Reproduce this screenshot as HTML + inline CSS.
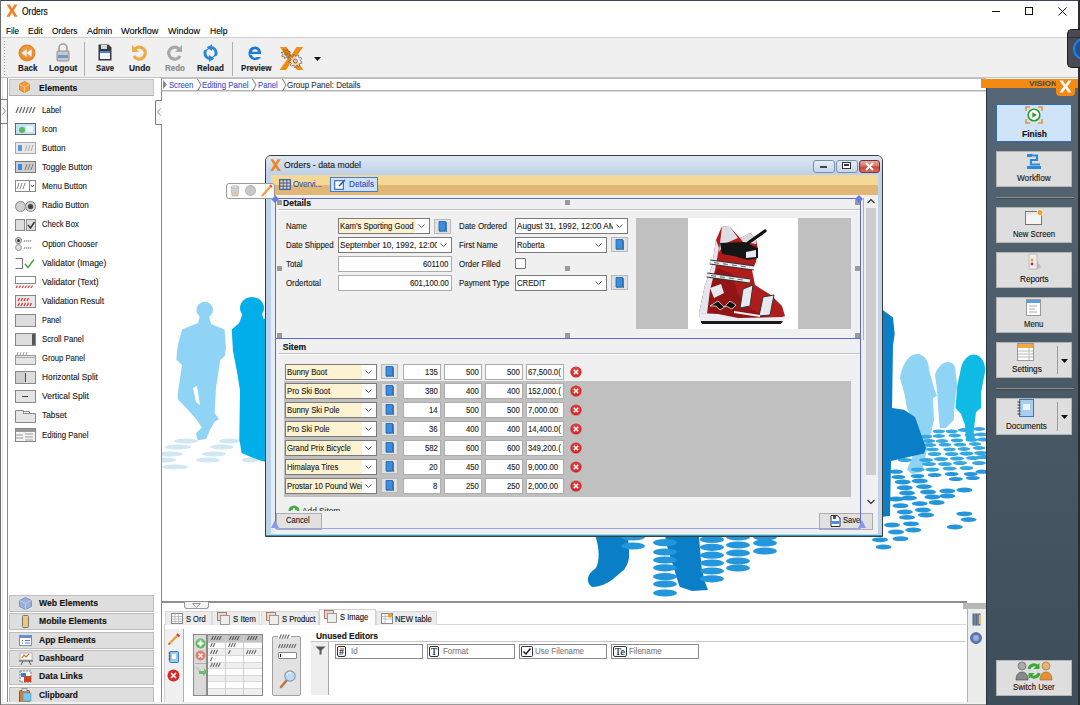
<!DOCTYPE html>
<html><head><meta charset="utf-8">
<style>
*{margin:0;padding:0;box-sizing:border-box}
html,body{width:1080px;height:705px;overflow:hidden;background:#fff;font-family:"Liberation Sans",sans-serif;font-size:11px;color:#000}
.a{position:absolute}
.t{position:absolute;white-space:nowrap;line-height:1}
.b{font-weight:bold}
.t{-webkit-text-stroke:0.12px currentColor}
</style></head><body>
<div class="a" style="left:0;top:0;width:1080px;height:705px;overflow:hidden">

<div class="a" style="left:0px;top:0px;width:1080px;height:1px;background:#3a4856"></div>
<div class="a" style="left:0px;top:0px;width:1px;height:705px;background:#6d6d6d"></div>
<div class="a" style="left:1078px;top:0px;width:2px;height:705px;background:#2d2d2d"></div>
<svg class="a" style="left:6px;top:4px;" width="12" height="13" viewBox="0 0 12 13"><path d="M0.5 0.5h3.2l2.3 3.8 2.3-3.8h3.2l-3.8 6 3.9 6.3h-3.3l-2.3-4-2.4 4H0.4l3.9-6.3z" fill="#f58220"/></svg>
<div class="t" style="left:22.00px;top:6.58px;font-size:10.3px;color:#000;transform:scaleX(0.8197);transform-origin:0 0;">Orders</div>
<div class="a" style="left:992px;top:11px;width:8px;height:1px;background:#111"></div>
<div class="a" style="left:1025px;top:7px;width:8px;height:8px;border:1px solid #111"></div>
<svg class="a" style="left:1058px;top:7px;" width="9" height="9" viewBox="0 0 9 9"><path d="M0.5 0.5L8.5 8.5M8.5 0.5L0.5 8.5" stroke="#111" stroke-width="1"/></svg>
<div class="t" style="left:5.50px;top:25.70px;font-size:9.8px;color:#000;transform:scaleX(0.8233);transform-origin:0 0;">File</div>
<div class="t" style="left:28.00px;top:25.70px;font-size:9.8px;color:#000;transform:scaleX(0.8646);transform-origin:0 0;">Edit</div>
<div class="t" style="left:52.40px;top:25.70px;font-size:9.8px;color:#000;transform:scaleX(0.8481);transform-origin:0 0;">Orders</div>
<div class="t" style="left:86.90px;top:25.70px;font-size:9.8px;color:#000;transform:scaleX(0.9108);transform-origin:0 0;">Admin</div>
<div class="t" style="left:121.40px;top:25.70px;font-size:9.8px;color:#000;transform:scaleX(0.9324);transform-origin:0 0;">Workflow</div>
<div class="t" style="left:167.80px;top:25.70px;font-size:9.8px;color:#000;transform:scaleX(0.9181);transform-origin:0 0;">Window</div>
<div class="t" style="left:210.00px;top:25.70px;font-size:9.8px;color:#000;transform:scaleX(0.8683);transform-origin:0 0;">Help</div>
<div class="a" style="left:1px;top:37px;width:1077px;height:41px;background:#f0f0f0;border-top:1px solid #d0d0d0;border-bottom:1px solid #c4c4c4"></div>
<div class="a" style="left:4px;top:41px;width:1px;height:1px;background:#9a9a9a"></div>
<div class="a" style="left:4px;top:44px;width:1px;height:1px;background:#9a9a9a"></div>
<div class="a" style="left:4px;top:47px;width:1px;height:1px;background:#9a9a9a"></div>
<div class="a" style="left:4px;top:50px;width:1px;height:1px;background:#9a9a9a"></div>
<div class="a" style="left:4px;top:53px;width:1px;height:1px;background:#9a9a9a"></div>
<div class="a" style="left:4px;top:56px;width:1px;height:1px;background:#9a9a9a"></div>
<div class="a" style="left:4px;top:59px;width:1px;height:1px;background:#9a9a9a"></div>
<div class="a" style="left:4px;top:62px;width:1px;height:1px;background:#9a9a9a"></div>
<div class="a" style="left:4px;top:65px;width:1px;height:1px;background:#9a9a9a"></div>
<div class="a" style="left:4px;top:68px;width:1px;height:1px;background:#9a9a9a"></div>
<div class="a" style="left:4px;top:71px;width:1px;height:1px;background:#9a9a9a"></div>
<div class="a" style="left:4px;top:74px;width:1px;height:1px;background:#9a9a9a"></div>
<div class="a" style="left:84px;top:42px;width:1px;height:34px;background:#b0b0b0"></div>
<div class="a" style="left:232px;top:42px;width:1px;height:34px;background:#b0b0b0"></div>
<div class="t" style="left:17.50px;top:64.02px;font-size:8.6px;color:#1a1a1a;font-weight:bold;transform:scaleX(0.9485);transform-origin:0 0;">Back</div>
<div class="t" style="left:48.90px;top:64.02px;font-size:8.6px;color:#1a1a1a;font-weight:bold;transform:scaleX(0.9716);transform-origin:0 0;">Logout</div>
<div class="t" style="left:96.10px;top:64.02px;font-size:8.6px;color:#1a1a1a;font-weight:bold;transform:scaleX(0.8962);transform-origin:0 0;">Save</div>
<div class="t" style="left:129.10px;top:64.02px;font-size:8.6px;color:#1a1a1a;font-weight:bold;transform:scaleX(0.9741);transform-origin:0 0;">Undo</div>
<div class="t" style="left:164.70px;top:64.02px;font-size:8.6px;color:#8a8a8a;font-weight:bold;transform:scaleX(0.9303);transform-origin:0 0;">Redo</div>
<div class="t" style="left:197.20px;top:64.02px;font-size:8.6px;color:#1a1a1a;font-weight:bold;transform:scaleX(0.9348);transform-origin:0 0;">Reload</div>
<div class="t" style="left:240.60px;top:64.02px;font-size:8.6px;color:#1a1a1a;font-weight:bold;transform:scaleX(0.9413);transform-origin:0 0;">Preview</div>
<svg class="a" style="left:18px;top:44px;" width="18" height="18" viewBox="0 0 18 18"><circle cx="9" cy="9" r="8.5" fill="#e8892a"/><circle cx="9" cy="8" r="6" fill="#f0a450" opacity=".6"/><path d="M3.5 9l5-3.8v7.6zM8.5 9l5-3.8v7.6z" fill="#fff"/></svg>
<svg class="a" style="left:55px;top:43px;" width="16" height="19" viewBox="0 0 16 19"><path d="M4 8V5a4 4 0 0 1 8 0v3" fill="none" stroke="#a0a0a0" stroke-width="1.6"/><rect x="2" y="8" width="12" height="10" rx="1" fill="#c8c8c8" stroke="#909090"/><rect x="3" y="12" width="10" height="3" fill="#6c9ad0"/></svg>
<svg class="a" style="left:98px;top:44px;" width="14" height="17" viewBox="0 0 14 17"><path d="M0.5 0.5h10l3 3v13h-13z" fill="#3a3a3a"/><rect x="2" y="7" width="10" height="8" fill="#eef4fb"/><rect x="2" y="7" width="10" height="2" fill="#4a7fd0"/><rect x="3" y="1" width="6" height="4" fill="#d8d8d8"/></svg>
<svg class="a" style="left:131px;top:44px;" width="17" height="17" viewBox="0 0 17 17"><path d="M4 5a6 6 0 1 1 -1 7" fill="none" stroke="#f0a848" stroke-width="3.2"/><path d="M1 1v7h7z" fill="#f0a848"/></svg>
<svg class="a" style="left:166px;top:44px;" width="17" height="17" viewBox="0 0 17 17"><path d="M13 5a6 6 0 1 0 1 7" fill="none" stroke="#a8a8a8" stroke-width="3.2"/><path d="M16 1v7h-7z" fill="#a8a8a8"/></svg>
<svg class="a" style="left:202px;top:44px;" width="17" height="18" viewBox="0 0 17 18"><circle cx="8.5" cy="9" r="5.6" fill="none" stroke="#2a86d8" stroke-width="3"/><path d="M1.5 5.5L5.5 3.5M15.5 12.5L11.5 14.5" stroke="#f0f0f0" stroke-width="2.2"/><path d="M5 3.6L10 0.2V7z" fill="#2a86d8"/><path d="M12 14.4L7 11V17.8z" fill="#2a86d8"/></svg>
<svg class="a" style="left:247px;top:45px;" width="16" height="16" viewBox="0 0 16 16"><path d="M2 9h12c.5-4-2-7.5-6-7.5S1.5 4.5 1.5 8.5 4.5 15 8.5 15c2.8 0 4.5-1.3 5.3-3h-4c-.5.6-1 .8-1.6.8-1.8 0-3-1.3-3.2-2.8zM4.9 6.8c.3-1.5 1.5-2.5 3.1-2.5s2.8 1 3 2.5z" fill="#1e7ad8"/></svg>
<svg class="a" style="left:279px;top:46px;" width="25" height="25" viewBox="0 0 25 25"><path d="M1 1h6.5l5 8 5-8H24l-8 11.5L24.5 24h-6.5L12.5 15.5 7 24H0.5l8.3-11.5z" fill="#f58a10"/><path d="M21.30 15.00 L23.00 16.15 L22.70 17.26 L20.66 17.40 L20.18 18.09 L20.74 20.06 L19.80 20.72 L18.14 19.51 L17.33 19.73 L16.50 21.60 L15.35 21.50 L14.86 19.51 L14.10 19.16 L12.26 20.06 L11.44 19.24 L12.34 17.40 L11.99 16.64 L10.00 16.15 L9.90 15.00 L11.77 14.17 L11.99 13.36 L10.78 11.70 L11.44 10.76 L13.41 11.32 L14.10 10.84 L14.24 8.80 L15.35 8.50 L16.50 10.20 L17.33 10.27 L18.76 8.80 L19.80 9.28 L19.59 11.32 L20.18 11.91 L22.22 11.70 L22.70 12.74 L21.23 14.17z" fill="rgba(255,255,255,.55)" stroke="#6a6a6a" stroke-width=".9"/><circle cx="16.5" cy="15" r="2" fill="none" stroke="#6a6a6a" stroke-width=".9"/><path d="M10.20 8.00 L11.51 8.90 L11.25 9.76 L9.66 9.78 L9.26 10.26 L9.56 11.82 L8.76 12.25 L7.62 11.14 L7.00 11.20 L6.10 12.51 L5.24 12.25 L5.22 10.66 L4.74 10.26 L3.18 10.56 L2.75 9.76 L3.86 8.62 L3.80 8.00 L2.49 7.10 L2.75 6.24 L4.34 6.22 L4.74 5.74 L4.44 4.18 L5.24 3.75 L6.38 4.86 L7.00 4.80 L7.90 3.49 L8.76 3.75 L8.78 5.34 L9.26 5.74 L10.82 5.44 L11.25 6.24 L10.14 7.38z" fill="none" stroke="#7a5a3a" stroke-width=".9"/><circle cx="7" cy="8" r="1.4" fill="none" stroke="#7a5a3a" stroke-width=".8"/></svg>
<svg class="a" style="left:314px;top:57px;" width="7" height="4" viewBox="0 0 7 4"><path d="M0 0h7l-3.5 4z" fill="#111"/></svg>
<div class="a" style="left:1067px;top:29px;width:13px;height:39px;background:#4a4a52;border-radius:5px 0 0 5px;border:1px solid #1e1e22;border-right:none"></div>
<div class="a" style="left:1068px;top:37px;width:12px;height:1px;background:#2a2a30"></div>
<svg class="a" style="left:1072px;top:37px;" width="8" height="24" viewBox="0 0 8 24"><circle cx="12" cy="12" r="10" fill="#2a4e88" stroke="#1a82e8" stroke-width="2.2"/></svg>
<div class="a" style="left:162px;top:78px;width:824px;height:524px;background:#fff"></div>
<div class="a" style="left:162px;top:78px;width:824px;height:1px;background:#bdbdbd"></div>
<div class="a" style="left:162px;top:90px;width:824px;height:1px;background:#b4b4b4"></div>
<div class="a" style="left:162px;top:91px;width:824px;height:1px;background:#dcdcdc"></div>
<svg class="a" style="left:163px;top:80px;" width="4" height="9" viewBox="0 0 4 9"><path d="M0 0L4 4.5L0 9z" fill="#8a8a8a"/></svg>
<div class="t" style="left:169.30px;top:80.91px;font-size:9.2px;color:#3a50d0;transform:scaleX(0.8302);transform-origin:0 0;">Screen</div>
<div class="t" style="left:202.40px;top:80.91px;font-size:9.2px;color:#3a50d0;transform:scaleX(0.8596);transform-origin:0 0;">Editing Panel</div>
<div class="t" style="left:258.00px;top:80.91px;font-size:9.2px;color:#3a50d0;transform:scaleX(0.8373);transform-origin:0 0;">Panel</div>
<div class="t" style="left:286.80px;top:80.91px;font-size:9.2px;color:#333;transform:scaleX(0.8671);transform-origin:0 0;">Group Panel: Details</div>
<svg class="a" style="left:197px;top:79px;" width="5" height="12" viewBox="0 0 5 12"><path d="M0.5 0L4 6L0.5 12" fill="none" stroke="#777" stroke-width="1"/></svg>
<svg class="a" style="left:252px;top:79px;" width="5" height="12" viewBox="0 0 5 12"><path d="M0.5 0L4 6L0.5 12" fill="none" stroke="#777" stroke-width="1"/></svg>
<svg class="a" style="left:282px;top:79px;" width="5" height="12" viewBox="0 0 5 12"><path d="M0.5 0L4 6L0.5 12" fill="none" stroke="#777" stroke-width="1"/></svg>
<svg class="a" style="left:162px;top:91px;" width="824" height="510" viewBox="0 0 824 510"><ellipse cx="24" cy="350" rx="12" ry="2.6" fill="#d2e7f4"/><ellipse cx="68" cy="350" rx="11" ry="2.6" fill="#d2e7f4"/><ellipse cx="16" cy="356" rx="13" ry="2.6" fill="#d2e7f4"/><ellipse cx="60" cy="356" rx="12" ry="2.6" fill="#d2e7f4"/><ellipse cx="8" cy="363" rx="13" ry="2.6" fill="#d2e7f4"/><ellipse cx="52" cy="363" rx="12" ry="2.6" fill="#d2e7f4"/><ellipse cx="90" cy="363" rx="6" ry="2.6" fill="#d2e7f4"/><ellipse cx="3" cy="369" rx="11" ry="2.6" fill="#d2e7f4"/><ellipse cx="46" cy="369" rx="12" ry="2.6" fill="#d2e7f4"/><ellipse cx="88" cy="369" rx="8" ry="2.6" fill="#d2e7f4"/><ellipse cx="13" cy="376" rx="13" ry="2.6" fill="#d2e7f4"/><circle cx="42.69999999999999" cy="219" r="8.3" fill="#8fd4f4"/><path d="M38.0 225.0 L47.0 225.0 L49.0 233.0 L62.6 238.6 L64.0 257.0 L62.6 265.6 L58.3 269.0 L54.0 296.8 L52.6 322.0 L57.0 328.0 L52.6 330.8 L48.0 339.0 L44.0 348.0 L35.6 349.3 L34.0 342.0 L39.9 336.5 L34.0 328.0 L26.0 319.0 L15.8 308.0 L15.8 302.5 L20.0 274.0 L14.3 268.4 L15.8 254.0 L20.0 238.6 L36.0 232.0z" fill="#8fd4f4"/><path d="M31.0 297.0 L35.0 295.0 L38.0 314.0 L34.0 311.0z" fill="#fff"/><ellipse cx="90" cy="217" rx="12" ry="11" fill="#00aeea"/><path d="M81.0 222.0 L100.0 223.0 L104.0 235.0 L76.0 235.0z" fill="#00aeea"/><path d="M78.0 231.5 L69.7 238.6 L71.0 260.0 L75.3 282.6 L78.0 299.6 L77.3 348.0 L79.6 362.0 L96.6 369.0 L104.0 371.0 L104.0 227.0 L100.0 229.0z" fill="#00aeea"/></svg>
<svg class="a" style="left:162px;top:91px;" width="824" height="510" viewBox="0 0 824 510"><path d="M917 354C925 354 929 362 929 370L934 388L937 396L933 398L934 420L928 445L922 472L912 474L907 470L913 455L916 440L912 420L907 408L904 392L900 378C902 366 908 354 917 354z" transform="translate(-162 -91)" fill="#8fd4f4"/><path d="M948 362C953 362 956 366 955.5 372L957.3 386L955 400L953.7 420L946 428L940 428L939 420L937 390L935 375C937 368 942 362 948 362z" transform="translate(-162 -91)" fill="#8fd4f4"/><path d="M974 354.5C982 355 986 364 985 372L981 393L981 408L976 412L973.6 432L975 440L966 441L965 425L961 414L955.5 408L957.3 386L961 368C963 360 968 354.5 974 354.5z" transform="translate(-162 -91)" fill="#0fbbe5"/><ellipse cx="776.8" cy="340.3" rx="6.2" ry="1.9" fill="#35a8e2"/><ellipse cx="789.6" cy="340.3" rx="6.2" ry="1.9" fill="#35a8e2"/><ellipse cx="802.0" cy="339.0" rx="6.2" ry="1.9" fill="#35a8e2"/><ellipse cx="817.0" cy="338.0" rx="6.2" ry="1.9" fill="#35a8e2"/><ellipse cx="764.0" cy="345.6" rx="6.2" ry="1.9" fill="#35a8e2"/><ellipse cx="776.8" cy="345.0" rx="6.2" ry="1.9" fill="#35a8e2"/><ellipse cx="792.8" cy="344.5" rx="6.2" ry="1.9" fill="#35a8e2"/><ellipse cx="808.7" cy="344.0" rx="6.2" ry="1.9" fill="#35a8e2"/><ellipse cx="819.0" cy="343.5" rx="6.2" ry="1.9" fill="#35a8e2"/><ellipse cx="767.0" cy="350.0" rx="6.2" ry="1.9" fill="#35a8e2"/><ellipse cx="780.0" cy="350.0" rx="6.2" ry="1.9" fill="#35a8e2"/><ellipse cx="795.0" cy="349.4" rx="6.2" ry="1.9" fill="#35a8e2"/><ellipse cx="809.8" cy="348.8" rx="6.2" ry="1.9" fill="#35a8e2"/><ellipse cx="821.0" cy="348.5" rx="6.2" ry="1.9" fill="#35a8e2"/><ellipse cx="768.0" cy="354.0" rx="6.2" ry="1.9" fill="#35a8e2"/><ellipse cx="783.0" cy="353.7" rx="6.2" ry="1.9" fill="#35a8e2"/><ellipse cx="798.0" cy="353.7" rx="6.2" ry="1.9" fill="#35a8e2"/><ellipse cx="813.0" cy="353.0" rx="6.2" ry="1.9" fill="#35a8e2"/><ellipse cx="770.4" cy="358.4" rx="6.2" ry="1.9" fill="#35a8e2"/><ellipse cx="787.5" cy="358.4" rx="6.2" ry="1.9" fill="#35a8e2"/><ellipse cx="802.0" cy="358.0" rx="6.2" ry="1.9" fill="#35a8e2"/><ellipse cx="817.0" cy="357.0" rx="6.2" ry="1.9" fill="#35a8e2"/><ellipse cx="772.6" cy="363.0" rx="7" ry="2.1" fill="#35a8e2"/><ellipse cx="789.6" cy="363.0" rx="7" ry="2.1" fill="#35a8e2"/><ellipse cx="804.5" cy="362.6" rx="7" ry="2.1" fill="#35a8e2"/><ellipse cx="819.0" cy="362.0" rx="7" ry="2.1" fill="#35a8e2"/><ellipse cx="742.8" cy="369.0" rx="7" ry="2.1" fill="#35a8e2"/><ellipse cx="764.0" cy="369.0" rx="7" ry="2.1" fill="#35a8e2"/><ellipse cx="779.0" cy="368.0" rx="7" ry="2.1" fill="#35a8e2"/><ellipse cx="795.0" cy="367.5" rx="7" ry="2.1" fill="#35a8e2"/><ellipse cx="811.0" cy="367.0" rx="7" ry="2.1" fill="#35a8e2"/><ellipse cx="821.0" cy="366.0" rx="7" ry="2.1" fill="#35a8e2"/><ellipse cx="767.0" cy="373.0" rx="7" ry="2.1" fill="#35a8e2"/><ellipse cx="783.0" cy="373.0" rx="7" ry="2.1" fill="#35a8e2"/><ellipse cx="798.0" cy="372.0" rx="7" ry="2.1" fill="#35a8e2"/><ellipse cx="817.0" cy="372.0" rx="7" ry="2.1" fill="#35a8e2"/><ellipse cx="734.0" cy="380.7" rx="7" ry="2.1" fill="#2496dc"/><ellipse cx="755.6" cy="378.6" rx="7" ry="2.1" fill="#35a8e2"/><ellipse cx="770.4" cy="378.6" rx="7" ry="2.1" fill="#35a8e2"/><ellipse cx="787.5" cy="377.5" rx="7" ry="2.1" fill="#35a8e2"/><ellipse cx="804.5" cy="377.0" rx="7" ry="2.1" fill="#35a8e2"/><ellipse cx="820.4" cy="380.7" rx="7" ry="2.1" fill="#2496dc"/><ellipse cx="736.4" cy="386.0" rx="7" ry="2.1" fill="#2496dc"/><ellipse cx="755.6" cy="385.0" rx="7" ry="2.1" fill="#2496dc"/><ellipse cx="772.6" cy="384.0" rx="7" ry="2.1" fill="#2496dc"/><ellipse cx="789.6" cy="383.0" rx="7" ry="2.1" fill="#2496dc"/><ellipse cx="808.7" cy="383.0" rx="7" ry="2.1" fill="#2496dc"/><ellipse cx="793.8" cy="388.0" rx="7" ry="2.1" fill="#2496dc"/><ellipse cx="810.9" cy="387.0" rx="7" ry="2.1" fill="#2496dc"/><ellipse cx="740.7" cy="391.0" rx="8" ry="2.4" fill="#2496dc"/><ellipse cx="757.7" cy="390.0" rx="8" ry="2.4" fill="#2496dc"/><ellipse cx="742.8" cy="396.7" rx="8" ry="2.4" fill="#2496dc"/><ellipse cx="762.0" cy="395.6" rx="8" ry="2.4" fill="#2496dc"/><ellipse cx="785.3" cy="400.0" rx="8" ry="2.4" fill="#2496dc"/><ellipse cx="802.4" cy="399.0" rx="8" ry="2.4" fill="#2496dc"/><ellipse cx="745.0" cy="402.0" rx="8" ry="2.4" fill="#2496dc"/><ellipse cx="766.0" cy="401.0" rx="8" ry="2.4" fill="#2496dc"/><ellipse cx="785.3" cy="405.0" rx="8" ry="2.4" fill="#2496dc"/><ellipse cx="734.0" cy="408.0" rx="8" ry="2.4" fill="#2496dc"/><ellipse cx="747.0" cy="407.0" rx="8" ry="2.4" fill="#2496dc"/><ellipse cx="770.4" cy="406.0" rx="8" ry="2.4" fill="#2496dc"/><ellipse cx="757.7" cy="412.6" rx="8" ry="2.4" fill="#2496dc"/><ellipse cx="774.7" cy="411.5" rx="8" ry="2.4" fill="#2496dc"/><ellipse cx="738.5" cy="414.7" rx="8" ry="2.4" fill="#2496dc"/><ellipse cx="760.9" cy="419.0" rx="8" ry="2.4" fill="#2496dc"/><ellipse cx="742.8" cy="421.0" rx="8" ry="2.4" fill="#2496dc"/><ellipse cx="802.4" cy="422.8" rx="8" ry="2.4" fill="#2496dc"/><ellipse cx="764.0" cy="424.0" rx="8" ry="2.4" fill="#2496dc"/><ellipse cx="745.0" cy="426.4" rx="8" ry="2.4" fill="#2496dc"/><ellipse cx="806.6" cy="428.6" rx="8" ry="2.4" fill="#2496dc"/><ellipse cx="730.0" cy="434.0" rx="8" ry="2.4" fill="#2496dc"/><ellipse cx="749.0" cy="432.8" rx="8" ry="2.4" fill="#2496dc"/><ellipse cx="792.8" cy="436.0" rx="8" ry="2.4" fill="#2496dc"/><ellipse cx="751.3" cy="439.0" rx="8" ry="2.4" fill="#2496dc"/><ellipse cx="734.0" cy="441.0" rx="8" ry="2.4" fill="#2496dc"/><ellipse cx="738.5" cy="447.7" rx="8" ry="2.4" fill="#2496dc"/><ellipse cx="718.0" cy="448.8" rx="8" ry="2.4" fill="#2496dc"/><ellipse cx="721.5" cy="456.0" rx="8" ry="2.4" fill="#2496dc"/><path d="M708.0 214.0 L720.8 219.0 L731.0 226.6 L732.7 243.0 L731.0 254.0 L730.0 317.0 L742.0 318.7 L753.0 326.0 L764.0 357.0 L762.0 362.6 L729.0 370.0 L728.0 425.0 L708.0 427.0z" fill="#0a7fc8"/><path d="M432.6 439.0L467.0 439.0C464.0 457.0 472.0 465.0 462.0 479.0C454.0 484.0 448.0 495.0 430.0 496.0C424.0 492.0 424.0 483.0 434.0 477.0C438.0 469.0 437.0 457.0 434.0 447.0z" fill="#0a7fc8"/><path d="M502.0 439.0 L536.5 439.0 L538.0 458.0 L539.7 477.0 L543.0 491.0 L546.0 499.0 L530.0 500.0 L517.6 495.7 L514.5 486.0 L509.8 470.5 L505.0 454.7z" fill="#0a7fc8"/><ellipse cx="503" cy="451.6" rx="12" ry="3.6" fill="#2496dc"/><ellipse cx="503" cy="461" rx="12" ry="3.6" fill="#2496dc"/><ellipse cx="503" cy="469" rx="12" ry="3.6" fill="#2496dc"/><ellipse cx="503" cy="476.79999999999995" rx="12" ry="3.6" fill="#2496dc"/><ellipse cx="503" cy="485.6" rx="12" ry="3.6" fill="#2496dc"/><ellipse cx="503" cy="493" rx="12" ry="3.6" fill="#2496dc"/><ellipse cx="503" cy="502" rx="12" ry="3.6" fill="#2496dc"/><ellipse cx="550" cy="448.4" rx="12" ry="3.6" fill="#2496dc"/><ellipse cx="550" cy="456.29999999999995" rx="12" ry="3.6" fill="#2496dc"/><ellipse cx="550" cy="464.20000000000005" rx="12" ry="3.6" fill="#2496dc"/><ellipse cx="550" cy="472" rx="12" ry="3.6" fill="#2496dc"/><ellipse cx="550" cy="480" rx="12" ry="3.6" fill="#2496dc"/><ellipse cx="550" cy="487.79999999999995" rx="12" ry="3.6" fill="#2496dc"/><ellipse cx="576" cy="446" rx="12" ry="3.6" fill="#2496dc"/><ellipse cx="576" cy="454" rx="12" ry="3.6" fill="#2496dc"/><ellipse cx="576" cy="462" rx="12" ry="3.6" fill="#2496dc"/><ellipse cx="576" cy="470" rx="12" ry="3.6" fill="#2496dc"/><ellipse cx="576" cy="477" rx="12" ry="3.6" fill="#2496dc"/><ellipse cx="603" cy="446" rx="12" ry="3.6" fill="#2496dc"/><ellipse cx="603" cy="452" rx="12" ry="3.6" fill="#2496dc"/><ellipse cx="603" cy="460" rx="12" ry="3.6" fill="#2496dc"/><ellipse cx="471" cy="446" rx="12" ry="3.6" fill="#2496dc"/><ellipse cx="471" cy="455" rx="12" ry="3.6" fill="#2496dc"/></svg>
<div class="a" style="left:1px;top:78px;width:161px;height:627px;background:#fff"></div>
<div class="a" style="left:1px;top:78px;width:6px;height:627px;background:#fff"></div>
<div class="a" style="left:2px;top:78px;width:1px;height:627px;background:#e4e4e4"></div>
<div class="a" style="left:7px;top:78px;width:1px;height:627px;background:#8c8c8c"></div>
<div class="a" style="left:161px;top:78px;width:1px;height:627px;background:#8a8a8a"></div>
<div class="a" style="left:1px;top:99px;width:7px;height:25px;background:#f6f6f6;border:1px solid #7a7a7a;border-left:none;border-radius:0 2px 2px 0"></div>
<svg class="a" style="left:2px;top:107px;" width="4" height="8" viewBox="0 0 4 8"><path d="M0.5 0.5L3.5 4L0.5 7.5" fill="none" stroke="#999" stroke-width="1"/></svg>
<div class="a" style="left:155px;top:100px;width:7px;height:25px;background:#f6f6f6;border:1px solid #7a7a7a;border-right:none;border-radius:2px 0 0 2px"></div>
<svg class="a" style="left:157px;top:108px;" width="4" height="8" viewBox="0 0 4 8"><path d="M3.5 0.5L0.5 4L3.5 7.5" fill="none" stroke="#999" stroke-width="1"/></svg>
<div class="a" style="left:9px;top:79px;width:145px;height:17px;background:#dedede;border:1px solid #c4c4c4;border-bottom:1px solid #b0b0b0"></div>
<svg class="a" style="left:19px;top:81px;" width="11" height="12" viewBox="0 0 11 12"><path d="M5.5 0.5l5 2.8v5.6l-5 2.8-5-2.8V3.3z" fill="#f29b3a" stroke="#e07a10" stroke-width=".8"/><path d="M0.5 3.3l5 2.8 5-2.8M5.5 6.1v5.4" fill="none" stroke="#fcd09a" stroke-width=".8"/></svg>
<div class="t" style="left:38.80px;top:83.72px;font-size:8.6px;color:#111;font-weight:bold;transform:scaleX(1.0043);transform-origin:0 0;">Elements</div>
<div class="t" style="left:42.00px;top:105.88px;font-size:9px;color:#1a1a1a;transform:scaleX(0.8629);transform-origin:0 0;">Label</div>
<svg class="a" style="left:15px;top:104px;" width="21" height="12" viewBox="0 0 21 12"><path d="M1.0 9L3.5 3" stroke="#666" stroke-width="1.2"/><path d="M4.3 9L6.8 3" stroke="#666" stroke-width="1.2"/><path d="M7.6 9L10.1 3" stroke="#666" stroke-width="1.2"/><path d="M10.9 9L13.4 3" stroke="#666" stroke-width="1.2"/><path d="M14.2 9L16.7 3" stroke="#666" stroke-width="1.2"/><path d="M17.5 9L20.0 3" stroke="#666" stroke-width="1.2"/></svg>
<div class="t" style="left:42.00px;top:124.98px;font-size:9px;color:#1a1a1a;transform:scaleX(0.8818);transform-origin:0 0;">Icon</div>
<svg class="a" style="left:15px;top:123px;" width="21" height="12" viewBox="0 0 21 12"><rect x=".5" y=".5" width="20" height="11" fill="#bfe3f7" stroke="#666"/><circle cx="7" cy="7" r="3" fill="#5cb85c"/><path d="M11 3h7v6h-7z" fill="#fff" opacity=".7"/></svg>
<div class="t" style="left:42.00px;top:144.08px;font-size:9px;color:#1a1a1a;transform:scaleX(0.9070);transform-origin:0 0;">Button</div>
<svg class="a" style="left:15px;top:142px;" width="21" height="12" viewBox="0 0 21 12"><rect x=".5" y=".5" width="20" height="11" fill="#e8e8e8" stroke="#aaa"/><rect x="3" y="3" width="4" height="6" fill="#5a9ad8"/><path d="M10 9l2-6M13 9l2-6M16 9l2-6" stroke="#aaa"/></svg>
<div class="t" style="left:42.00px;top:163.18px;font-size:9px;color:#1a1a1a;transform:scaleX(0.9085);transform-origin:0 0;">Toggle Button</div>
<svg class="a" style="left:15px;top:161px;" width="21" height="12" viewBox="0 0 21 12"><rect x=".5" y=".5" width="20" height="11" fill="#cfcfcf" stroke="#777"/><rect x="3" y="3" width="4" height="6" fill="#3a8ad8"/><path d="M10 9l2-6M13 9l2-6M16 9l2-6" stroke="#777"/></svg>
<div class="t" style="left:42.00px;top:182.28px;font-size:9px;color:#1a1a1a;transform:scaleX(0.8818);transform-origin:0 0;">Menu Button</div>
<svg class="a" style="left:15px;top:180px;" width="21" height="12" viewBox="0 0 21 12"><rect x=".5" y=".5" width="20" height="11" fill="#fff" stroke="#888"/><path d="M14.5 .5v11" stroke="#888"/><path d="M2 9l2-6M5 9l2-6M8 9l2-6" stroke="#888"/><path d="M16 5l1.5 2 1.5-2" fill="none" stroke="#555"/></svg>
<div class="t" style="left:42.00px;top:201.38px;font-size:9px;color:#1a1a1a;transform:scaleX(0.8975);transform-origin:0 0;">Radio Button</div>
<svg class="a" style="left:15px;top:200px;" width="21" height="13" viewBox="0 0 21 13"><circle cx="5.5" cy="6.5" r="5" fill="#d0d0d0" stroke="#888"/><circle cx="15.5" cy="6.5" r="5" fill="#d0d0d0" stroke="#888"/><circle cx="15.5" cy="6.5" r="2.6" fill="#444"/></svg>
<div class="t" style="left:42.00px;top:220.48px;font-size:9px;color:#1a1a1a;transform:scaleX(0.8433);transform-origin:0 0;">Check Box</div>
<svg class="a" style="left:15px;top:219px;" width="21" height="12" viewBox="0 0 21 12"><rect x=".5" y=".5" width="9" height="11" fill="#ddd" stroke="#888"/><rect x="11.5" y=".5" width="9" height="11" fill="#ddd" stroke="#888"/><path d="M13 6l2.5 3 4-6" fill="none" stroke="#333" stroke-width="1.4"/></svg>
<div class="t" style="left:42.00px;top:239.58px;font-size:9px;color:#1a1a1a;transform:scaleX(0.8821);transform-origin:0 0;">Option Chooser</div>
<svg class="a" style="left:15px;top:237px;" width="21" height="14" viewBox="0 0 21 14"><circle cx="3.5" cy="3.5" r="3" fill="#ddd" stroke="#777"/><circle cx="3.5" cy="3.5" r="1.5" fill="#333"/><circle cx="3.5" cy="10.5" r="3" fill="#ddd" stroke="#999"/><path d="M9 5l1-2M11 5l1-2M13 5l1-2M15 5l1-2M9 12l1-2M11 12l1-2M13 12l1-2M15 12l1-2" stroke="#777" stroke-width=".8"/></svg>
<div class="t" style="left:42.00px;top:258.68px;font-size:9px;color:#1a1a1a;transform:scaleX(0.9421);transform-origin:0 0;">Validator (Image)</div>
<svg class="a" style="left:15px;top:257px;" width="21" height="13" viewBox="0 0 21 13"><path d="M.5 1.5h7v10h-7" fill="none" stroke="#777"/><path d="M10 7l3 3.5 6-8" fill="none" stroke="#4aa84a" stroke-width="1.5"/></svg>
<div class="t" style="left:42.00px;top:277.78px;font-size:9px;color:#1a1a1a;transform:scaleX(0.9474);transform-origin:0 0;">Validator (Text)</div>
<svg class="a" style="left:15px;top:276px;" width="21" height="13" viewBox="0 0 21 13"><rect x=".5" y=".5" width="20" height="7" fill="#fff" stroke="#888"/><path d="M1 12l1.5-2.5M4 12l1.5-2.5M7 12l1.5-2.5M10 12l1.5-2.5M13 12l1.5-2.5M16 12l1.5-2.5" stroke="#d33" stroke-width="1.2"/></svg>
<div class="t" style="left:42.00px;top:296.88px;font-size:9px;color:#1a1a1a;transform:scaleX(0.9272);transform-origin:0 0;">Validation Result</div>
<svg class="a" style="left:15px;top:295px;" width="21" height="13" viewBox="0 0 21 13"><rect x=".5" y=".5" width="20" height="12" fill="#e8e8e8" stroke="#888"/><path d="M3 6l1.5-3M6 6l1.5-3M9 6l1.5-3M12 6l1.5-3M3 11l1.5-3M6 11l1.5-3M9 11l1.5-3M12 11l1.5-3M15 11l1.5-3" stroke="#d33" stroke-width="1.2"/></svg>
<div class="t" style="left:42.00px;top:315.98px;font-size:9px;color:#1a1a1a;transform:scaleX(0.8255);transform-origin:0 0;">Panel</div>
<svg class="a" style="left:15px;top:314px;" width="21" height="13" viewBox="0 0 21 13"><rect x=".5" y=".5" width="20" height="12" fill="#ddd" stroke="#888"/></svg>
<div class="t" style="left:42.00px;top:335.08px;font-size:9px;color:#1a1a1a;transform:scaleX(0.8684);transform-origin:0 0;">Scroll Panel</div>
<svg class="a" style="left:15px;top:333px;" width="21" height="13" viewBox="0 0 21 13"><rect x=".5" y=".5" width="20" height="12" fill="#ddd" stroke="#888"/><rect x="17" y="1" width="3" height="11" fill="#555"/></svg>
<div class="t" style="left:42.00px;top:354.18px;font-size:9px;color:#1a1a1a;transform:scaleX(0.8510);transform-origin:0 0;">Group Panel</div>
<svg class="a" style="left:15px;top:351px;" width="21" height="14" viewBox="0 0 21 14"><path d="M2 4l1-3M5 4l1-3M8 4l1-3M11 4l1-3" stroke="#888" stroke-width=".8"/><rect x=".5" y="4.5" width="20" height="9" fill="#e4e4e4" stroke="#999"/><path d="M.5 6.5h20" stroke="#aaa"/></svg>
<div class="t" style="left:42.00px;top:373.28px;font-size:9px;color:#1a1a1a;transform:scaleX(0.9236);transform-origin:0 0;">Horizontal Split</div>
<svg class="a" style="left:15px;top:371px;" width="21" height="13" viewBox="0 0 21 13"><rect x=".5" y=".5" width="20" height="12" fill="#ddd" stroke="#888"/><rect x="1" y="1" width="9" height="11" fill="#cfcfcf"/><path d="M10.5 2v9" stroke="#444"/></svg>
<div class="t" style="left:42.00px;top:392.38px;font-size:9px;color:#1a1a1a;transform:scaleX(0.9451);transform-origin:0 0;">Vertical Split</div>
<svg class="a" style="left:15px;top:390px;" width="21" height="13" viewBox="0 0 21 13"><rect x=".5" y=".5" width="20" height="12" fill="#e4e4e4" stroke="#888"/><path d="M7 6.5h6" stroke="#444"/></svg>
<div class="t" style="left:42.00px;top:411.48px;font-size:9px;color:#1a1a1a;transform:scaleX(0.9316);transform-origin:0 0;">Tabset</div>
<svg class="a" style="left:15px;top:409px;" width="21" height="14" viewBox="0 0 21 14"><path d="M.5 13.5V1.5h8v3h12v9z" fill="#e6e6e6" stroke="#888"/><path d="M8.5 4.5V2.5h6v2" fill="none" stroke="#888"/></svg>
<div class="t" style="left:42.00px;top:430.58px;font-size:9px;color:#1a1a1a;transform:scaleX(0.8768);transform-origin:0 0;">Editing Panel</div>
<svg class="a" style="left:15px;top:428px;" width="21" height="14" viewBox="0 0 21 14"><rect x=".5" y=".5" width="20" height="13" fill="#f4f4f4" stroke="#888"/><rect x="1" y="1" width="19" height="3" fill="#999"/><path d="M1 7h7M1 10h7M10 6h8M10 9h8M10 12h8" stroke="#999"/></svg>
<div class="a" style="left:9px;top:595px;width:145px;height:17px;background:#dedede;border:1px solid #bdbdbd"></div>
<div class="t" style="left:38.70px;top:599.22px;font-size:8.6px;color:#111;font-weight:bold;transform:scaleX(1.0064);transform-origin:0 0;">Web Elements</div>
<svg class="a" style="left:19px;top:597px;" width="13" height="13" viewBox="0 0 13 13"><path d="M6.5.5l6 3v6l-6 3-6-3v-6z" fill="#9ab0d8" stroke="#6f88b8" stroke-width=".8"/><path d="M.5 3.5l6 3 6-3M6.5 6.5v6" fill="none" stroke="#c8d4ec" stroke-width=".8"/></svg>
<div class="a" style="left:9px;top:613px;width:145px;height:17px;background:#dedede;border:1px solid #bdbdbd"></div>
<div class="t" style="left:38.70px;top:617.42px;font-size:8.6px;color:#111;font-weight:bold;transform:scaleX(0.9977);transform-origin:0 0;">Mobile Elements</div>
<svg class="a" style="left:22px;top:615px;" width="7" height="13" viewBox="0 0 7 13"><rect x=".5" y=".5" width="6" height="12" rx="1" fill="#f2c870" stroke="#777"/></svg>
<div class="a" style="left:9px;top:632px;width:145px;height:17px;background:#dedede;border:1px solid #bdbdbd"></div>
<div class="t" style="left:38.70px;top:635.72px;font-size:8.6px;color:#111;font-weight:bold;transform:scaleX(0.9888);transform-origin:0 0;">App Elements</div>
<svg class="a" style="left:19px;top:635px;" width="13" height="11" viewBox="0 0 13 11"><rect x=".5" y=".5" width="12" height="10" fill="#fff" stroke="#6a8ed0"/><rect x="1" y="1" width="11" height="2" fill="#6a8ed0"/><path d="M3 5.5h1M6 5.5h5M3 8h1M6 8h5" stroke="#5a7ec0"/></svg>
<div class="a" style="left:9px;top:650px;width:145px;height:17px;background:#dedede;border:1px solid #bdbdbd"></div>
<div class="t" style="left:38.70px;top:654.02px;font-size:8.6px;color:#111;font-weight:bold;transform:scaleX(0.9952);transform-origin:0 0;">Dashboard</div>
<svg class="a" style="left:19px;top:652px;" width="14" height="13" viewBox="0 0 14 13"><rect x="1" y="1" width="12" height="7" fill="#fff" stroke="#888" stroke-width=".6"/><path d="M3 6l2-3 2 2 3-3" fill="none" stroke="#e07020" stroke-width="1.2"/><path d="M0 9h14M4 9l-2 4M10 9l2 4" stroke="#555"/></svg>
<div class="a" style="left:9px;top:668px;width:145px;height:17px;background:#dedede;border:1px solid #bdbdbd"></div>
<div class="t" style="left:38.70px;top:672.32px;font-size:8.6px;color:#111;font-weight:bold;transform:scaleX(1.0072);transform-origin:0 0;">Data Links</div>
<svg class="a" style="left:19px;top:670px;" width="13" height="13" viewBox="0 0 13 13"><rect x="1" y="1" width="11" height="11" fill="#fff" stroke="#777" stroke-dasharray="2 1"/><rect x="5" y="6" width="7" height="6" fill="#d04020"/><rect x="2" y="3" width="5" height="4" fill="#3a7ad0"/></svg>
<div class="a" style="left:9px;top:687px;width:145px;height:17px;background:#dedede;border:1px solid #bdbdbd"></div>
<div class="t" style="left:38.70px;top:690.62px;font-size:8.6px;color:#111;font-weight:bold;transform:scaleX(0.9718);transform-origin:0 0;">Clipboard</div>
<svg class="a" style="left:19px;top:688px;" width="13" height="15" viewBox="0 0 13 15"><rect x=".5" y="2.5" width="10" height="12" rx="1" fill="#d08040" stroke="#905020"/><rect x="4" y="5" width="8" height="8" fill="#7ac8f0" stroke="#4a98c0" stroke-width=".6"/><rect x="3" y="0.5" width="5" height="3" fill="#ddd" stroke="#777" stroke-width=".6"/></svg>
<div class="a" style="left:265px;top:155px;width:618px;height:382px;background:#bed3ea;border:1px solid #3c3c3c;border-radius:6px 6px 0 0"></div>
<div class="a" style="left:266px;top:156px;width:616px;height:20px;background:linear-gradient(#dde8f4,#bccfe7);border-radius:5px 5px 0 0"></div>
<svg class="a" style="left:270px;top:159px;" width="11" height="12" viewBox="0 0 11 12"><path d="M0.3 0.3h3l2.2 3.6 2.2-3.6h3l-3.6 5.7 3.7 5.9H7.7l-2.2-3.7-2.3 3.7H0.2l3.7-5.9z" fill="#f58220"/></svg>
<div class="t" style="left:283.90px;top:160.88px;font-size:9px;color:#1a1a1a;transform:scaleX(0.9622);transform-origin:0 0;">Orders - data model</div>
<div class="a" style="left:813px;top:160px;width:22px;height:13px;background:linear-gradient(#e6eef8,#c6d6ea);border:1px solid #7d8ea8;border-radius:3px"></div>
<div class="a" style="left:836px;top:160px;width:22px;height:13px;background:linear-gradient(#e6eef8,#c6d6ea);border:1px solid #7d8ea8;border-radius:3px"></div>
<div class="a" style="left:820px;top:166px;width:7px;height:2px;background:#fff;border:1px solid #444"></div>
<div class="a" style="left:842px;top:162px;width:9px;height:7px;border:1px solid #333;background:#fff"></div>
<div class="a" style="left:844px;top:164px;width:5px;height:2px;background:#335"></div>
<div class="a" style="left:859px;top:160px;width:21px;height:13px;background:linear-gradient(#e8a598 0%,#d47a6a 45%,#c8443a 55%,#d86a5a 100%);border:1px solid #6a3a3a;border-radius:3px"></div>
<svg class="a" style="left:865px;top:162px;" width="9" height="9" viewBox="0 0 9 9"><path d="M1 1L8 8M8 1L1 8" stroke="#fff" stroke-width="2"/></svg>
<div class="a" style="left:271px;top:175px;width:607px;height:10px;background:#f4d898"></div>
<div class="a" style="left:271px;top:185px;width:607px;height:10px;background:#e1b776"></div>
<svg class="a" style="left:279px;top:179px;" width="12" height="11" viewBox="0 0 12 11"><rect x=".7" y=".7" width="10.6" height="9.6" fill="#f4d898" stroke="#3358b8" stroke-width="1.2"/><path d="M.7 4h10.6M.7 7.2h10.6M4.2.7v9.6M7.8.7v9.6" stroke="#3358b8" stroke-width="1"/></svg>
<div class="t" style="left:293.00px;top:180.30px;font-size:8.5px;color:#2e4fb8;transform:scaleX(0.9165);transform-origin:0 0;">Overvi...</div>
<div class="a" style="left:330px;top:177px;width:48px;height:15px;background:#cde2f6;border:1px solid #4a7ad0"></div>
<svg class="a" style="left:334px;top:179px;" width="12" height="11" viewBox="0 0 12 11"><rect x=".7" y="1.7" width="8.6" height="8.6" fill="#fff" stroke="#2e5fb8" stroke-width="1.1"/><path d="M5 7l6-6" stroke="#2e5fb8" stroke-width="1.6"/></svg>
<div class="t" style="left:348.50px;top:180.30px;font-size:8.5px;color:#2e4fb8;transform:scaleX(0.9622);transform-origin:0 0;">Details</div>
<div class="a" style="left:271px;top:195px;width:607px;height:339px;background:#f0f0f0"></div>
<div class="a" style="left:271px;top:195px;width:4px;height:339px;background:#e4ecf6"></div>
<div class="a" style="left:865px;top:196px;width:12px;height:316px;background:#f0f0f0"></div>
<div class="a" style="left:866px;top:208px;width:10px;height:267px;background:#cdcdcd"></div>
<svg class="a" style="left:866px;top:198px;" width="10" height="6" viewBox="0 0 10 6"><path d="M1.5 5L5 1.5L8.5 5" fill="none" stroke="#333" stroke-width="1.2"/></svg>
<svg class="a" style="left:866px;top:499px;" width="10" height="6" viewBox="0 0 10 6"><path d="M1.5 1L5 4.5L8.5 1" fill="none" stroke="#333" stroke-width="1.2"/></svg>
<div class="a" style="left:266px;top:535px;width:616px;height:1px;background:#2aa0b0"></div>
<div class="t" style="left:282.70px;top:199.22px;font-size:8.6px;color:#111;font-weight:bold;transform:scaleX(0.9929);transform-origin:0 0;">Details</div>
<div class="a" style="left:279px;top:209px;width:581px;height:1px;background:#c4c4c4"></div>
<div class="a" style="left:279px;top:210px;width:581px;height:1px;background:#fff"></div>
<div class="t" style="left:285.60px;top:221.80px;font-size:8.5px;color:#1a1a1a;transform:scaleX(0.9240);transform-origin:0 0;">Name</div>
<div class="t" style="left:285.60px;top:240.80px;font-size:8.5px;color:#1a1a1a;transform:scaleX(0.9240);transform-origin:0 0;">Date Shipped</div>
<div class="t" style="left:285.60px;top:259.80px;font-size:8.5px;color:#1a1a1a;transform:scaleX(0.9240);transform-origin:0 0;">Total</div>
<div class="t" style="left:285.60px;top:278.80px;font-size:8.5px;color:#1a1a1a;transform:scaleX(0.9240);transform-origin:0 0;">Ordertotal</div>
<div class="a" style="left:338px;top:218px;width:92px;height:16px;background:#fff;border:1px solid #7a7a7a"></div>
<div class="a" style="left:339px;top:219px;width:76px;height:14px;background:#fdf2d2"></div>
<div class="a" style="left:339px;top:219px;width:76px;height:14px;overflow:hidden"><div class="t" style="left:1.2px;top:3.10px;font-size:8.5px;color:#1a1a1a;transform:scaleX(0.912);transform-origin:0 0">Kam&#8217;s Sporting Good</div></div>
<svg class="a" style="left:418px;top:224px;" width="7" height="4" viewBox="0 0 7 4"><path d="M.5 .5L3.5 3.5L6.5 .5" fill="none" stroke="#555" stroke-width="1"/></svg>
<div class="a" style="left:434px;top:219px;width:17px;height:15px;background:#e1e1e1;border:1px solid #b8b8b8"></div>
<svg class="a" style="left:438px;top:221px;" width="9" height="11" viewBox="0 0 9 11"><path d="M1 .5h6.5v9.5H1z" fill="#3a8ee0" stroke="#1d5fa8" stroke-width=".8"/><path d="M7.5 1.5h1v9.5h-6.5v-1" fill="none" stroke="#1d5fa8" stroke-width=".8"/></svg>
<div class="a" style="left:338px;top:237px;width:114px;height:16px;background:#fff;border:1px solid #7a7a7a"></div>
<div class="a" style="left:339px;top:238px;width:98px;height:14px;overflow:hidden"><div class="t" style="left:1.2px;top:3.10px;font-size:8.5px;color:#1a1a1a;transform:scaleX(0.96);transform-origin:0 0">September 10, 1992, 12:00 AM</div></div>
<svg class="a" style="left:440px;top:243px;" width="7" height="4" viewBox="0 0 7 4"><path d="M.5 .5L3.5 3.5L6.5 .5" fill="none" stroke="#555" stroke-width="1"/></svg>
<div class="a" style="left:338px;top:256px;width:114px;height:16px;background:#fff;border:1px solid #adadad"></div>
<div class="t" style="left:423.21px;top:260.10px;font-size:8.5px;color:#1a1a1a;transform:scaleX(0.9120);transform-origin:0 0;">601100</div>
<div class="a" style="left:338px;top:275px;width:114px;height:16px;background:#fff;border:1px solid #adadad"></div>
<div class="t" style="left:409.71px;top:279.10px;font-size:8.5px;color:#1a1a1a;transform:scaleX(0.9120);transform-origin:0 0;">601,100.00</div>
<div class="t" style="left:459.30px;top:221.80px;font-size:8.5px;color:#1a1a1a;transform:scaleX(0.9300);transform-origin:0 0;">Date Ordered</div>
<div class="t" style="left:459.30px;top:240.80px;font-size:8.5px;color:#1a1a1a;transform:scaleX(0.9300);transform-origin:0 0;">First Name</div>
<div class="t" style="left:459.30px;top:259.80px;font-size:8.5px;color:#1a1a1a;transform:scaleX(0.9300);transform-origin:0 0;">Order Filled</div>
<div class="t" style="left:459.30px;top:278.80px;font-size:8.5px;color:#1a1a1a;transform:scaleX(0.9300);transform-origin:0 0;">Payment Type</div>
<div class="a" style="left:515px;top:218px;width:113px;height:16px;background:#fff;border:1px solid #7a7a7a"></div>
<div class="a" style="left:516px;top:219px;width:97px;height:14px;overflow:hidden"><div class="t" style="left:1.2px;top:3.10px;font-size:8.5px;color:#1a1a1a;transform:scaleX(0.96);transform-origin:0 0">August 31, 1992, 12:00 AM</div></div>
<svg class="a" style="left:616px;top:224px;" width="7" height="4" viewBox="0 0 7 4"><path d="M.5 .5L3.5 3.5L6.5 .5" fill="none" stroke="#555" stroke-width="1"/></svg>
<div class="a" style="left:515px;top:237px;width:92px;height:16px;background:#fff;border:1px solid #7a7a7a"></div>
<div class="a" style="left:516px;top:238px;width:76px;height:14px;overflow:hidden"><div class="t" style="left:1.2px;top:3.10px;font-size:8.5px;color:#1a1a1a;transform:scaleX(0.912);transform-origin:0 0">Roberta</div></div>
<svg class="a" style="left:595px;top:243px;" width="7" height="4" viewBox="0 0 7 4"><path d="M.5 .5L3.5 3.5L6.5 .5" fill="none" stroke="#555" stroke-width="1"/></svg>
<div class="a" style="left:611px;top:237px;width:17px;height:15px;background:#e1e1e1;border:1px solid #b8b8b8"></div>
<svg class="a" style="left:615px;top:239px;" width="9" height="11" viewBox="0 0 9 11"><path d="M1 .5h6.5v9.5H1z" fill="#3a8ee0" stroke="#1d5fa8" stroke-width=".8"/><path d="M7.5 1.5h1v9.5h-6.5v-1" fill="none" stroke="#1d5fa8" stroke-width=".8"/></svg>
<div class="a" style="left:515px;top:258px;width:11px;height:11px;background:#fff;border:1px solid #777;border-radius:1px"></div>
<div class="a" style="left:515px;top:275px;width:92px;height:16px;background:#fff;border:1px solid #7a7a7a"></div>
<div class="a" style="left:516px;top:276px;width:76px;height:14px;overflow:hidden"><div class="t" style="left:1.2px;top:3.10px;font-size:8.5px;color:#1a1a1a;transform:scaleX(0.912);transform-origin:0 0">CREDIT</div></div>
<svg class="a" style="left:595px;top:281px;" width="7" height="4" viewBox="0 0 7 4"><path d="M.5 .5L3.5 3.5L6.5 .5" fill="none" stroke="#555" stroke-width="1"/></svg>
<div class="a" style="left:611px;top:275px;width:17px;height:15px;background:#e1e1e1;border:1px solid #b8b8b8"></div>
<svg class="a" style="left:615px;top:277px;" width="9" height="11" viewBox="0 0 9 11"><path d="M1 .5h6.5v9.5H1z" fill="#3a8ee0" stroke="#1d5fa8" stroke-width=".8"/><path d="M7.5 1.5h1v9.5h-6.5v-1" fill="none" stroke="#1d5fa8" stroke-width=".8"/></svg>
<div class="a" style="left:636px;top:218px;width:215px;height:111px;background:#c0c0c0"></div>
<div class="a" style="left:688px;top:218px;width:110px;height:111px;background:#fff"></div>
<svg class="a" style="left:688px;top:218px;" width="110" height="111" viewBox="0 0 110 111"><path d="M34 8L42 9L52 20L62 15L68 21L70 32L68 44L64 52L67 67L83 77L94 88L97 98L94 105L13 105L11 95L17 67L24 48L28 22z" fill="#b01c1c"/><path d="M30 50L44 56L50 76L62 90L78 99L94 99L97 98L94 105L13 105L14 80L22 62z" fill="#7e1010" opacity=".6"/><path d="M28 22L24 48L17 67L11 95L19 96L22 72L27 52L31 30z" fill="#e4e6ee"/><path d="M34 8L42 9L50 20L36 26L31 34z" fill="#dcdde4"/><path d="M52 20L62 15L68 21L68 26L55 24z" fill="#d8d8dc"/><path d="M32 25L56 24L70 30L70 40L60 42L46 38L34 36z" fill="#151515"/><path d="M58 34L68 32L68 39L58 40z" fill="#e8e8ee"/><path d="M22 44L66 50" stroke="#333" stroke-width="5"/><path d="M22 44L66 50" stroke="#eceef4" stroke-width="3.2"/><path d="M26 44.6L62 49.4" stroke="#555" stroke-width=".9" stroke-dasharray="5 4"/><path d="M19 57L62 63" stroke="#333" stroke-width="5"/><path d="M19 57L62 63" stroke="#eceef4" stroke-width="3.2"/><path d="M23 57.6L58 62.4" stroke="#555" stroke-width=".9" stroke-dasharray="5 4"/><path d="M55 71L65 67L62 88L52 90z" fill="#e8e8ee" stroke="#333" stroke-width="1"/><path d="M75 79L86 77L82 97L71 98z" fill="#e8e8ee" stroke="#333" stroke-width="1"/><path d="M22 70L33 66L36 75L26 80z" fill="#e8e8ee"/><path d="M22 88L30 83L36 89L42 83L48 87L44 91L38 88L32 92L28 88z" fill="#111" stroke="#fff" stroke-width=".7"/><path d="M11 95L30 96L50 100L94 99L97 98L96 103L12 103z" fill="#ececf2"/><path d="M46 94L72 98" stroke="#f0f0f4" stroke-width="2"/><path d="M13 103L94 103L93 106L14 106z" fill="#1a1a1a"/><path d="M60 25L77 13" stroke="#111" stroke-width="3.2" stroke-linecap="round"/></svg>
<div class="t" style="left:282.70px;top:343.22px;font-size:8.6px;color:#111;font-weight:bold;transform:scaleX(1.0000);transform-origin:0 0;">Sitem</div>
<div class="a" style="left:279px;top:353px;width:581px;height:1px;background:#c4c4c4"></div>
<div class="a" style="left:279px;top:354px;width:581px;height:1px;background:#fff"></div>
<div class="a" style="left:284px;top:381px;width:567px;height:116px;background:#c0c0c0"></div>
<div class="a" style="left:285px;top:364px;width:92px;height:16px;background:#fff;border:1px solid #7a7a7a"></div>
<div class="a" style="left:286px;top:365px;width:76px;height:14px;background:#fdf2d2"></div>
<div class="a" style="left:286px;top:365px;width:76px;height:14px;overflow:hidden"><div class="t" style="left:1.2px;top:3.10px;font-size:8.5px;color:#1a1a1a;transform:scaleX(0.912);transform-origin:0 0">Bunny Boot</div></div>
<svg class="a" style="left:365px;top:370px;" width="7" height="4" viewBox="0 0 7 4"><path d="M.5 .5L3.5 3.5L6.5 .5" fill="none" stroke="#555" stroke-width="1"/></svg>
<div class="a" style="left:381px;top:364px;width:17px;height:15px;background:#e1e1e1;border:1px solid #b8b8b8"></div>
<svg class="a" style="left:385px;top:366px;" width="9" height="11" viewBox="0 0 9 11"><path d="M1 .5h6.5v9.5H1z" fill="#3a8ee0" stroke="#1d5fa8" stroke-width=".8"/><path d="M7.5 1.5h1v9.5h-6.5v-1" fill="none" stroke="#1d5fa8" stroke-width=".8"/></svg>
<div class="a" style="left:403px;top:364px;width:38px;height:16px;background:#fff;border:1px solid #adadad"></div>
<div class="t" style="left:424.57px;top:368.10px;font-size:8.5px;color:#1a1a1a;transform:scaleX(0.9120);transform-origin:0 0;">135</div>
<div class="a" style="left:444px;top:364px;width:38px;height:16px;background:#fff;border:1px solid #adadad"></div>
<div class="t" style="left:465.57px;top:368.10px;font-size:8.5px;color:#1a1a1a;transform:scaleX(0.9120);transform-origin:0 0;">500</div>
<div class="a" style="left:485px;top:364px;width:38px;height:16px;background:#fff;border:1px solid #adadad"></div>
<div class="t" style="left:506.57px;top:368.10px;font-size:8.5px;color:#1a1a1a;transform:scaleX(0.9120);transform-origin:0 0;">500</div>
<div class="a" style="left:526px;top:364px;width:38px;height:16px;background:#fff;border:1px solid #adadad"></div>
<div class="a" style="left:527px;top:365px;width:36px;height:14px;overflow:hidden"><div class="t" style="left:1.2px;top:3.10px;font-size:8.5px;color:#1a1a1a;transform:scaleX(.912);transform-origin:0 0">67,500.0(</div></div>
<svg class="a" style="left:570px;top:366px;" width="12" height="12" viewBox="0 0 12 12"><circle cx="6" cy="6" r="5.6" fill="#d42a2a"/><circle cx="6" cy="5" r="4" fill="#e85050" opacity=".5"/><path d="M3.8 3.8L8.2 8.2M8.2 3.8L3.8 8.2" stroke="#fff" stroke-width="1.5"/></svg>
<div class="a" style="left:285px;top:383px;width:92px;height:16px;background:#fff;border:1px solid #7a7a7a"></div>
<div class="a" style="left:286px;top:384px;width:76px;height:14px;background:#fdf2d2"></div>
<div class="a" style="left:286px;top:384px;width:76px;height:14px;overflow:hidden"><div class="t" style="left:1.2px;top:3.10px;font-size:8.5px;color:#1a1a1a;transform:scaleX(0.912);transform-origin:0 0">Pro Ski Boot</div></div>
<svg class="a" style="left:365px;top:389px;" width="7" height="4" viewBox="0 0 7 4"><path d="M.5 .5L3.5 3.5L6.5 .5" fill="none" stroke="#555" stroke-width="1"/></svg>
<div class="a" style="left:381px;top:383px;width:17px;height:15px;background:#e1e1e1;border:1px solid #b8b8b8"></div>
<svg class="a" style="left:385px;top:385px;" width="9" height="11" viewBox="0 0 9 11"><path d="M1 .5h6.5v9.5H1z" fill="#3a8ee0" stroke="#1d5fa8" stroke-width=".8"/><path d="M7.5 1.5h1v9.5h-6.5v-1" fill="none" stroke="#1d5fa8" stroke-width=".8"/></svg>
<div class="a" style="left:403px;top:383px;width:38px;height:16px;background:#fff;border:1px solid #adadad"></div>
<div class="t" style="left:424.57px;top:387.10px;font-size:8.5px;color:#1a1a1a;transform:scaleX(0.9120);transform-origin:0 0;">380</div>
<div class="a" style="left:444px;top:383px;width:38px;height:16px;background:#fff;border:1px solid #adadad"></div>
<div class="t" style="left:465.57px;top:387.10px;font-size:8.5px;color:#1a1a1a;transform:scaleX(0.9120);transform-origin:0 0;">400</div>
<div class="a" style="left:485px;top:383px;width:38px;height:16px;background:#fff;border:1px solid #adadad"></div>
<div class="t" style="left:506.57px;top:387.10px;font-size:8.5px;color:#1a1a1a;transform:scaleX(0.9120);transform-origin:0 0;">400</div>
<div class="a" style="left:526px;top:383px;width:38px;height:16px;background:#fff;border:1px solid #adadad"></div>
<div class="a" style="left:527px;top:384px;width:36px;height:14px;overflow:hidden"><div class="t" style="left:1.2px;top:3.10px;font-size:8.5px;color:#1a1a1a;transform:scaleX(.912);transform-origin:0 0">152,000.(</div></div>
<svg class="a" style="left:570px;top:385px;" width="12" height="12" viewBox="0 0 12 12"><circle cx="6" cy="6" r="5.6" fill="#d42a2a"/><circle cx="6" cy="5" r="4" fill="#e85050" opacity=".5"/><path d="M3.8 3.8L8.2 8.2M8.2 3.8L3.8 8.2" stroke="#fff" stroke-width="1.5"/></svg>
<div class="a" style="left:285px;top:402px;width:92px;height:16px;background:#fff;border:1px solid #7a7a7a"></div>
<div class="a" style="left:286px;top:403px;width:76px;height:14px;background:#fdf2d2"></div>
<div class="a" style="left:286px;top:403px;width:76px;height:14px;overflow:hidden"><div class="t" style="left:1.2px;top:3.10px;font-size:8.5px;color:#1a1a1a;transform:scaleX(0.912);transform-origin:0 0">Bunny Ski Pole</div></div>
<svg class="a" style="left:365px;top:408px;" width="7" height="4" viewBox="0 0 7 4"><path d="M.5 .5L3.5 3.5L6.5 .5" fill="none" stroke="#555" stroke-width="1"/></svg>
<div class="a" style="left:381px;top:402px;width:17px;height:15px;background:#e1e1e1;border:1px solid #b8b8b8"></div>
<svg class="a" style="left:385px;top:404px;" width="9" height="11" viewBox="0 0 9 11"><path d="M1 .5h6.5v9.5H1z" fill="#3a8ee0" stroke="#1d5fa8" stroke-width=".8"/><path d="M7.5 1.5h1v9.5h-6.5v-1" fill="none" stroke="#1d5fa8" stroke-width=".8"/></svg>
<div class="a" style="left:403px;top:402px;width:38px;height:16px;background:#fff;border:1px solid #adadad"></div>
<div class="t" style="left:428.88px;top:406.10px;font-size:8.5px;color:#1a1a1a;transform:scaleX(0.9120);transform-origin:0 0;">14</div>
<div class="a" style="left:444px;top:402px;width:38px;height:16px;background:#fff;border:1px solid #adadad"></div>
<div class="t" style="left:465.57px;top:406.10px;font-size:8.5px;color:#1a1a1a;transform:scaleX(0.9120);transform-origin:0 0;">500</div>
<div class="a" style="left:485px;top:402px;width:38px;height:16px;background:#fff;border:1px solid #adadad"></div>
<div class="t" style="left:506.57px;top:406.10px;font-size:8.5px;color:#1a1a1a;transform:scaleX(0.9120);transform-origin:0 0;">500</div>
<div class="a" style="left:526px;top:402px;width:38px;height:16px;background:#fff;border:1px solid #adadad"></div>
<div class="a" style="left:527px;top:403px;width:36px;height:14px;overflow:hidden"><div class="t" style="left:1.2px;top:3.10px;font-size:8.5px;color:#1a1a1a;transform:scaleX(.912);transform-origin:0 0">7,000.00</div></div>
<svg class="a" style="left:570px;top:404px;" width="12" height="12" viewBox="0 0 12 12"><circle cx="6" cy="6" r="5.6" fill="#d42a2a"/><circle cx="6" cy="5" r="4" fill="#e85050" opacity=".5"/><path d="M3.8 3.8L8.2 8.2M8.2 3.8L3.8 8.2" stroke="#fff" stroke-width="1.5"/></svg>
<div class="a" style="left:285px;top:421px;width:92px;height:16px;background:#fff;border:1px solid #7a7a7a"></div>
<div class="a" style="left:286px;top:422px;width:76px;height:14px;background:#fdf2d2"></div>
<div class="a" style="left:286px;top:422px;width:76px;height:14px;overflow:hidden"><div class="t" style="left:1.2px;top:3.10px;font-size:8.5px;color:#1a1a1a;transform:scaleX(0.912);transform-origin:0 0">Pro Ski Pole</div></div>
<svg class="a" style="left:365px;top:427px;" width="7" height="4" viewBox="0 0 7 4"><path d="M.5 .5L3.5 3.5L6.5 .5" fill="none" stroke="#555" stroke-width="1"/></svg>
<div class="a" style="left:381px;top:421px;width:17px;height:15px;background:#e1e1e1;border:1px solid #b8b8b8"></div>
<svg class="a" style="left:385px;top:423px;" width="9" height="11" viewBox="0 0 9 11"><path d="M1 .5h6.5v9.5H1z" fill="#3a8ee0" stroke="#1d5fa8" stroke-width=".8"/><path d="M7.5 1.5h1v9.5h-6.5v-1" fill="none" stroke="#1d5fa8" stroke-width=".8"/></svg>
<div class="a" style="left:403px;top:421px;width:38px;height:16px;background:#fff;border:1px solid #adadad"></div>
<div class="t" style="left:428.88px;top:425.10px;font-size:8.5px;color:#1a1a1a;transform:scaleX(0.9120);transform-origin:0 0;">36</div>
<div class="a" style="left:444px;top:421px;width:38px;height:16px;background:#fff;border:1px solid #adadad"></div>
<div class="t" style="left:465.57px;top:425.10px;font-size:8.5px;color:#1a1a1a;transform:scaleX(0.9120);transform-origin:0 0;">400</div>
<div class="a" style="left:485px;top:421px;width:38px;height:16px;background:#fff;border:1px solid #adadad"></div>
<div class="t" style="left:506.57px;top:425.10px;font-size:8.5px;color:#1a1a1a;transform:scaleX(0.9120);transform-origin:0 0;">400</div>
<div class="a" style="left:526px;top:421px;width:38px;height:16px;background:#fff;border:1px solid #adadad"></div>
<div class="a" style="left:527px;top:422px;width:36px;height:14px;overflow:hidden"><div class="t" style="left:1.2px;top:3.10px;font-size:8.5px;color:#1a1a1a;transform:scaleX(.912);transform-origin:0 0">14,400.0(</div></div>
<svg class="a" style="left:570px;top:423px;" width="12" height="12" viewBox="0 0 12 12"><circle cx="6" cy="6" r="5.6" fill="#d42a2a"/><circle cx="6" cy="5" r="4" fill="#e85050" opacity=".5"/><path d="M3.8 3.8L8.2 8.2M8.2 3.8L3.8 8.2" stroke="#fff" stroke-width="1.5"/></svg>
<div class="a" style="left:285px;top:440px;width:92px;height:16px;background:#fff;border:1px solid #7a7a7a"></div>
<div class="a" style="left:286px;top:441px;width:76px;height:14px;background:#fdf2d2"></div>
<div class="a" style="left:286px;top:441px;width:76px;height:14px;overflow:hidden"><div class="t" style="left:1.2px;top:3.10px;font-size:8.5px;color:#1a1a1a;transform:scaleX(0.912);transform-origin:0 0">Grand Prix Bicycle</div></div>
<svg class="a" style="left:365px;top:446px;" width="7" height="4" viewBox="0 0 7 4"><path d="M.5 .5L3.5 3.5L6.5 .5" fill="none" stroke="#555" stroke-width="1"/></svg>
<div class="a" style="left:381px;top:440px;width:17px;height:15px;background:#e1e1e1;border:1px solid #b8b8b8"></div>
<svg class="a" style="left:385px;top:442px;" width="9" height="11" viewBox="0 0 9 11"><path d="M1 .5h6.5v9.5H1z" fill="#3a8ee0" stroke="#1d5fa8" stroke-width=".8"/><path d="M7.5 1.5h1v9.5h-6.5v-1" fill="none" stroke="#1d5fa8" stroke-width=".8"/></svg>
<div class="a" style="left:403px;top:440px;width:38px;height:16px;background:#fff;border:1px solid #adadad"></div>
<div class="t" style="left:424.57px;top:444.10px;font-size:8.5px;color:#1a1a1a;transform:scaleX(0.9120);transform-origin:0 0;">582</div>
<div class="a" style="left:444px;top:440px;width:38px;height:16px;background:#fff;border:1px solid #adadad"></div>
<div class="t" style="left:465.57px;top:444.10px;font-size:8.5px;color:#1a1a1a;transform:scaleX(0.9120);transform-origin:0 0;">600</div>
<div class="a" style="left:485px;top:440px;width:38px;height:16px;background:#fff;border:1px solid #adadad"></div>
<div class="t" style="left:506.57px;top:444.10px;font-size:8.5px;color:#1a1a1a;transform:scaleX(0.9120);transform-origin:0 0;">600</div>
<div class="a" style="left:526px;top:440px;width:38px;height:16px;background:#fff;border:1px solid #adadad"></div>
<div class="a" style="left:527px;top:441px;width:36px;height:14px;overflow:hidden"><div class="t" style="left:1.2px;top:3.10px;font-size:8.5px;color:#1a1a1a;transform:scaleX(.912);transform-origin:0 0">349,200.(</div></div>
<svg class="a" style="left:570px;top:442px;" width="12" height="12" viewBox="0 0 12 12"><circle cx="6" cy="6" r="5.6" fill="#d42a2a"/><circle cx="6" cy="5" r="4" fill="#e85050" opacity=".5"/><path d="M3.8 3.8L8.2 8.2M8.2 3.8L3.8 8.2" stroke="#fff" stroke-width="1.5"/></svg>
<div class="a" style="left:285px;top:459px;width:92px;height:16px;background:#fff;border:1px solid #7a7a7a"></div>
<div class="a" style="left:286px;top:460px;width:76px;height:14px;background:#fdf2d2"></div>
<div class="a" style="left:286px;top:460px;width:76px;height:14px;overflow:hidden"><div class="t" style="left:1.2px;top:3.10px;font-size:8.5px;color:#1a1a1a;transform:scaleX(0.912);transform-origin:0 0">Himalaya Tires</div></div>
<svg class="a" style="left:365px;top:465px;" width="7" height="4" viewBox="0 0 7 4"><path d="M.5 .5L3.5 3.5L6.5 .5" fill="none" stroke="#555" stroke-width="1"/></svg>
<div class="a" style="left:381px;top:459px;width:17px;height:15px;background:#e1e1e1;border:1px solid #b8b8b8"></div>
<svg class="a" style="left:385px;top:461px;" width="9" height="11" viewBox="0 0 9 11"><path d="M1 .5h6.5v9.5H1z" fill="#3a8ee0" stroke="#1d5fa8" stroke-width=".8"/><path d="M7.5 1.5h1v9.5h-6.5v-1" fill="none" stroke="#1d5fa8" stroke-width=".8"/></svg>
<div class="a" style="left:403px;top:459px;width:38px;height:16px;background:#fff;border:1px solid #adadad"></div>
<div class="t" style="left:428.88px;top:463.10px;font-size:8.5px;color:#1a1a1a;transform:scaleX(0.9120);transform-origin:0 0;">20</div>
<div class="a" style="left:444px;top:459px;width:38px;height:16px;background:#fff;border:1px solid #adadad"></div>
<div class="t" style="left:465.57px;top:463.10px;font-size:8.5px;color:#1a1a1a;transform:scaleX(0.9120);transform-origin:0 0;">450</div>
<div class="a" style="left:485px;top:459px;width:38px;height:16px;background:#fff;border:1px solid #adadad"></div>
<div class="t" style="left:506.57px;top:463.10px;font-size:8.5px;color:#1a1a1a;transform:scaleX(0.9120);transform-origin:0 0;">450</div>
<div class="a" style="left:526px;top:459px;width:38px;height:16px;background:#fff;border:1px solid #adadad"></div>
<div class="a" style="left:527px;top:460px;width:36px;height:14px;overflow:hidden"><div class="t" style="left:1.2px;top:3.10px;font-size:8.5px;color:#1a1a1a;transform:scaleX(.912);transform-origin:0 0">9,000.00</div></div>
<svg class="a" style="left:570px;top:461px;" width="12" height="12" viewBox="0 0 12 12"><circle cx="6" cy="6" r="5.6" fill="#d42a2a"/><circle cx="6" cy="5" r="4" fill="#e85050" opacity=".5"/><path d="M3.8 3.8L8.2 8.2M8.2 3.8L3.8 8.2" stroke="#fff" stroke-width="1.5"/></svg>
<div class="a" style="left:285px;top:478px;width:92px;height:16px;background:#fff;border:1px solid #7a7a7a"></div>
<div class="a" style="left:286px;top:479px;width:76px;height:14px;background:#fdf2d2"></div>
<div class="a" style="left:286px;top:479px;width:76px;height:14px;overflow:hidden"><div class="t" style="left:1.2px;top:3.10px;font-size:8.5px;color:#1a1a1a;transform:scaleX(0.912);transform-origin:0 0">Prostar  10 Pound Weights</div></div>
<svg class="a" style="left:365px;top:484px;" width="7" height="4" viewBox="0 0 7 4"><path d="M.5 .5L3.5 3.5L6.5 .5" fill="none" stroke="#555" stroke-width="1"/></svg>
<div class="a" style="left:381px;top:478px;width:17px;height:15px;background:#e1e1e1;border:1px solid #b8b8b8"></div>
<svg class="a" style="left:385px;top:480px;" width="9" height="11" viewBox="0 0 9 11"><path d="M1 .5h6.5v9.5H1z" fill="#3a8ee0" stroke="#1d5fa8" stroke-width=".8"/><path d="M7.5 1.5h1v9.5h-6.5v-1" fill="none" stroke="#1d5fa8" stroke-width=".8"/></svg>
<div class="a" style="left:403px;top:478px;width:38px;height:16px;background:#fff;border:1px solid #adadad"></div>
<div class="t" style="left:433.19px;top:482.10px;font-size:8.5px;color:#1a1a1a;transform:scaleX(0.9120);transform-origin:0 0;">8</div>
<div class="a" style="left:444px;top:478px;width:38px;height:16px;background:#fff;border:1px solid #adadad"></div>
<div class="t" style="left:465.57px;top:482.10px;font-size:8.5px;color:#1a1a1a;transform:scaleX(0.9120);transform-origin:0 0;">250</div>
<div class="a" style="left:485px;top:478px;width:38px;height:16px;background:#fff;border:1px solid #adadad"></div>
<div class="t" style="left:506.57px;top:482.10px;font-size:8.5px;color:#1a1a1a;transform:scaleX(0.9120);transform-origin:0 0;">250</div>
<div class="a" style="left:526px;top:478px;width:38px;height:16px;background:#fff;border:1px solid #adadad"></div>
<div class="a" style="left:527px;top:479px;width:36px;height:14px;overflow:hidden"><div class="t" style="left:1.2px;top:3.10px;font-size:8.5px;color:#1a1a1a;transform:scaleX(.912);transform-origin:0 0">2,000.00</div></div>
<svg class="a" style="left:570px;top:480px;" width="12" height="12" viewBox="0 0 12 12"><circle cx="6" cy="6" r="5.6" fill="#d42a2a"/><circle cx="6" cy="5" r="4" fill="#e85050" opacity=".5"/><path d="M3.8 3.8L8.2 8.2M8.2 3.8L3.8 8.2" stroke="#fff" stroke-width="1.5"/></svg>
<div class="a" style="left:285px;top:503px;width:80px;height:8px;overflow:hidden"><svg class="a" style="left:3px;top:2px" width="12" height="12"><circle cx="6" cy="6" r="5.5" fill="#4aa84a"/><path d="M6 3v6M3 6h6" stroke="#fff" stroke-width="1.6"/></svg><div class="t" style="left:17px;top:4px;font-size:9px;color:#333;transform:scaleX(.92);transform-origin:0 0">Add Sitem</div></div>
<div class="a" style="left:276px;top:513px;width:46px;height:17px;background:#e1e1e1;border:1px solid #adadad"></div>
<div class="t" style="left:286.40px;top:516.20px;font-size:8.5px;color:#1a1a1a;transform:scaleX(0.8958);transform-origin:0 0;">Cancel</div>
<div class="a" style="left:819px;top:513px;width:54px;height:17px;background:#e1e1e1;border:1px solid #adadad"></div>
<svg class="a" style="left:830px;top:515px;" width="11" height="12" viewBox="0 0 11 12"><path d="M1 .5h6l3 2.5v8.5H1z" fill="#fff" stroke="#333"/><rect x="1.5" y="6" width="8" height="3" fill="#4a90e0"/><rect x="3" y="1" width="3" height="3" fill="#555"/></svg>
<div class="t" style="left:843.40px;top:516.40px;font-size:8.5px;color:#1a1a1a;transform:scaleX(0.8930);transform-origin:0 0;">Save</div>
<div class="a" style="left:275px;top:198px;width:586px;height:1px;background:#5a6ad8"></div>
<div class="a" style="left:275px;top:198px;width:1px;height:331px;background:#5a6ad8"></div>
<div class="a" style="left:860px;top:198px;width:1px;height:331px;background:#5a6ad8"></div>
<div class="a" style="left:275px;top:338px;width:586px;height:1px;background:#5a6ad8"></div>
<div class="a" style="left:275px;top:528px;width:586px;height:1px;background:#9aa4ea"></div>
<div class="a" style="left:863px;top:198px;width:1px;height:142px;background:#a4acee"></div>
<div class="a" style="left:277px;top:200px;width:5px;height:5px;background:#9a9a9a"></div>
<div class="a" style="left:565px;top:200px;width:5px;height:5px;background:#9a9a9a"></div>
<div class="a" style="left:277px;top:266px;width:5px;height:5px;background:#9a9a9a"></div>
<div class="a" style="left:855px;top:266px;width:5px;height:5px;background:#9a9a9a"></div>
<div class="a" style="left:277px;top:333px;width:5px;height:5px;background:#9a9a9a"></div>
<div class="a" style="left:565px;top:333px;width:5px;height:5px;background:#9a9a9a"></div>
<div class="a" style="left:855px;top:333px;width:5px;height:5px;background:#9a9a9a"></div>
<div class="a" style="left:855px;top:200px;width:5px;height:5px;background:#9a9a9a"></div>
<div class="a" style="left:565px;top:266px;width:5px;height:5px;background:#9a9a9a"></div>
<svg class="a" style="left:271px;top:195px;" width="9" height="9" viewBox="0 0 9 9"><path d="M0 4L4 0L8 4L4 8z" fill="#6a7ae0"/></svg>
<svg class="a" style="left:855px;top:195px;" width="9" height="9" viewBox="0 0 9 9"><path d="M0 4L4 0L8 4L4 8z" fill="#6a7ae0"/></svg>
<svg class="a" style="left:271px;top:520px;" width="9" height="9" viewBox="0 0 9 9"><path d="M4 0L8 8H0z" fill="#8a9ae8"/></svg>
<svg class="a" style="left:858px;top:520px;" width="9" height="9" viewBox="0 0 9 9"><path d="M4 0L8 8H0z" fill="#8a9ae8"/></svg>
<div class="a" style="left:226px;top:183px;width:49px;height:16px;background:rgba(255,255,250,.85);border:1px solid #9a9a9a;border-radius:3px"></div>
<svg class="a" style="left:230px;top:185px;" width="10" height="12" viewBox="0 0 10 12"><path d="M1 2h8l-1 9H2z" fill="#d0d0d0" stroke="#aaa" stroke-width=".6"/><ellipse cx="5" cy="2" rx="4" ry="1.3" fill="#e0e0e0" stroke="#aaa" stroke-width=".6"/><circle cx="5" cy="8" r="1.5" fill="#f5c070"/></svg>
<svg class="a" style="left:245px;top:185px;" width="11" height="11" viewBox="0 0 11 11"><circle cx="5.5" cy="5.5" r="5" fill="#c8c8c8" stroke="#999" stroke-width=".6"/></svg>
<svg class="a" style="left:260px;top:184px;" width="13" height="13" viewBox="0 0 13 13"><path d="M2 12L11 2" stroke="#e8a040" stroke-width="2.2"/><path d="M10 1l2 2" stroke="#d33" stroke-width="1.5"/></svg>
<div class="a" style="left:162px;top:601px;width:824px;height:104px;background:#fff"></div>
<div class="a" style="left:162px;top:601px;width:805px;height:2px;background:#8e8e8e"></div>
<div class="a" style="left:184px;top:602px;width:25px;height:7px;background:#f4f4f4;border:1px solid #9a9a9a;border-top:none;border-radius:0 0 3px 3px"></div>
<svg class="a" style="left:192px;top:603px;" width="9" height="5" viewBox="0 0 9 5"><path d="M.5 .5h8L4.5 4.5z" fill="none" stroke="#999"/></svg>
<div class="a" style="left:164px;top:624px;width:802px;height:79px;background:#fff;border-left:1px solid #d0d0d0;border-top:1px solid #d8d8d8"></div>
<div class="a" style="left:165px;top:611px;width:47px;height:14px;background:#ececec;border:1px solid #dadada;border-bottom:none"></div>
<svg class="a" style="left:171px;top:613px;" width="12" height="11" viewBox="0 0 12 11"><rect x=".5" y=".5" width="11" height="10" fill="#fff" stroke="#888"/><path d="M.5 3.5h11M.5 6h11M.5 8.5h11M4 .5v10M7.5 .5v10" stroke="#aaa" stroke-width=".7"/></svg>
<div class="t" style="left:185.50px;top:615.10px;font-size:8.5px;color:#111;transform:scaleX(0.8829);transform-origin:0 0;">S Ord</div>
<div class="a" style="left:212px;top:611px;width:48px;height:14px;background:#ececec;border:1px solid #dadada;border-bottom:none"></div>
<svg class="a" style="left:217px;top:612px;" width="13" height="13" viewBox="0 0 13 13"><rect x=".5" y=".5" width="9" height="8" fill="#e8d8d0" stroke="#a06050" stroke-width=".8"/><rect x="3.5" y="3.5" width="9" height="9" fill="#eee" stroke="#888" stroke-width=".8"/></svg>
<div class="t" style="left:232.50px;top:615.10px;font-size:8.5px;color:#111;transform:scaleX(0.9283);transform-origin:0 0;">S Item</div>
<div class="a" style="left:261px;top:611px;width:58px;height:14px;background:#ececec;border:1px solid #dadada;border-bottom:none"></div>
<svg class="a" style="left:266px;top:612px;" width="13" height="13" viewBox="0 0 13 13"><rect x=".5" y=".5" width="9" height="8" fill="#e8d8d0" stroke="#a06050" stroke-width=".8"/><rect x="3.5" y="3.5" width="9" height="9" fill="#eee" stroke="#888" stroke-width=".8"/></svg>
<div class="t" style="left:281.50px;top:615.10px;font-size:8.5px;color:#111;transform:scaleX(0.8922);transform-origin:0 0;">S Product</div>
<div class="a" style="left:319px;top:609px;width:57px;height:16px;background:#fafafa;border:1px solid #d0d0d0;border-bottom:none"></div>
<svg class="a" style="left:324px;top:610px;" width="13" height="13" viewBox="0 0 13 13"><rect x=".5" y=".5" width="9" height="8" fill="#e8d8d0" stroke="#a06050" stroke-width=".8"/><rect x="3.5" y="3.5" width="9" height="9" fill="#eee" stroke="#888" stroke-width=".8"/></svg>
<div class="t" style="left:339.50px;top:613.10px;font-size:8.5px;color:#111;transform:scaleX(0.8909);transform-origin:0 0;">S Image</div>
<div class="a" style="left:376px;top:611px;width:61px;height:14px;background:#ececec;border:1px solid #dadada;border-bottom:none"></div>
<svg class="a" style="left:381px;top:613px;" width="12" height="11" viewBox="0 0 12 11"><rect x=".5" y=".5" width="11" height="10" fill="#fff" stroke="#888"/><path d="M.5 3.5h11M.5 6h11M4 .5v10" stroke="#aaa" stroke-width=".7"/><circle cx="9" cy="2.5" r="2.3" fill="#f0a030"/></svg>
<div class="t" style="left:395.00px;top:615.10px;font-size:8.5px;color:#111;transform:scaleX(0.9034);transform-origin:0 0;">NEW table</div>
<div class="a" style="left:165px;top:629px;width:18px;height:74px;background:#f0f0f0"></div>
<div class="a" style="left:183px;top:629px;width:1px;height:74px;background:#b0b0b0"></div>
<svg class="a" style="left:167px;top:633px;" width="14" height="12" viewBox="0 0 14 12"><path d="M2 11L11 2" stroke="#e8a040" stroke-width="2.4"/><path d="M10 1l2.5 2.5" stroke="#d33" stroke-width="1.8"/><path d="M1 12l2-1-1-1z" fill="#333"/></svg>
<svg class="a" style="left:168px;top:651px;" width="11" height="12" viewBox="0 0 11 12"><rect x="1.5" y=".5" width="9" height="11" rx="1" fill="#9ac8f0" stroke="#3a78c0"/><rect x="4" y="3" width="4" height="5" fill="#fff"/><path d="M.5 2h2M.5 5h2M.5 8h2" stroke="#333" stroke-width=".8"/></svg>
<svg class="a" style="left:167px;top:669px;" width="13" height="13" viewBox="0 0 13 13"><circle cx="6.5" cy="6.5" r="6" fill="#d42a2a"/><path d="M4 4l5 5M9 4l-5 5" stroke="#fff" stroke-width="1.6"/></svg>
<div class="a" style="left:193px;top:634px;width:70px;height:62px;background:#fff;border:1px solid #8a8a8a"></div>
<div class="a" style="left:194px;top:635px;width:13px;height:60px;background:#dadada"></div>
<div class="a" style="left:206px;top:635px;width:1.5px;height:60px;background:#8a8a8a"></div>
<div class="a" style="left:208px;top:635px;width:54px;height:7px;background:#c4c4c4"></div>
<div class="a" style="left:208px;top:642px;width:54px;height:1px;background:#d8d8d8"></div>
<div class="a" style="left:208px;top:648px;width:54px;height:7px;background:#efefef"></div>
<div class="a" style="left:208px;top:648px;width:54px;height:1px;background:#d8d8d8"></div>
<div class="a" style="left:208px;top:655px;width:54px;height:1px;background:#d8d8d8"></div>
<div class="a" style="left:208px;top:662px;width:54px;height:6px;background:#efefef"></div>
<div class="a" style="left:208px;top:662px;width:54px;height:1px;background:#d8d8d8"></div>
<div class="a" style="left:208px;top:668px;width:54px;height:1px;background:#d8d8d8"></div>
<div class="a" style="left:208px;top:675px;width:54px;height:6px;background:#efefef"></div>
<div class="a" style="left:208px;top:675px;width:54px;height:1px;background:#d8d8d8"></div>
<div class="a" style="left:208px;top:681px;width:54px;height:1px;background:#d8d8d8"></div>
<div class="a" style="left:208px;top:688px;width:54px;height:7px;background:#efefef"></div>
<div class="a" style="left:208px;top:688px;width:54px;height:1px;background:#d8d8d8"></div>
<div class="a" style="left:225px;top:635px;width:1px;height:60px;background:#cfcfcf"></div>
<div class="a" style="left:243px;top:635px;width:1px;height:60px;background:#cfcfcf"></div>
<svg class="a" style="left:0px;top:0px;left:0;top:0;position:absolute" width="300" height="700" viewBox="0 0 300 700"><path d="M211.5 640L213.3 636M214.1 640L215.9 636M216.7 640L218.5 636M219.3 640L221.1 636" stroke="#555" stroke-width="1.1" fill="none"/><path d="M229.5 640L231.3 636M232.1 640L233.9 636M234.7 640L236.5 636M237.3 640L239.1 636" stroke="#555" stroke-width="1.1" fill="none"/><path d="M247.5 640L249.3 636M250.1 640L251.9 636M252.7 640L254.5 636M255.3 640L257.1 636" stroke="#555" stroke-width="1.1" fill="none"/><path d="M210.5 647L212.3 643M213.1 647L214.9 643" stroke="#666" stroke-width="1.1" fill="none"/><path d="M228.5 647L230.3 643M231.1 647L232.9 643M233.7 647L235.5 643" stroke="#666" stroke-width="1.1" fill="none"/><path d="M210.5 654L212.3 650M213.1 654L214.9 650M215.7 654L217.5 650" stroke="#666" stroke-width="1.1" fill="none"/><path d="M228.5 654L230.3 650" stroke="#666" stroke-width="1.1" fill="none"/><path d="M246.5 654L248.3 650M249.1 654L250.9 650M251.7 654L253.5 650M254.3 654L256.1 650" stroke="#666" stroke-width="1.1" fill="none"/><path d="M210.5 661L212.3 657" stroke="#666" stroke-width="1.1" fill="none"/><path d="M210.5 667L212.3 663M213.1 667L214.9 663M215.7 667L217.5 663M218.3 667L220.1 663" stroke="#666" stroke-width="1.1" fill="none"/></svg>
<svg class="a" style="left:195px;top:638px;" width="11" height="11" viewBox="0 0 11 11"><circle cx="5.5" cy="5.5" r="5" fill="#5ab85a"/><circle cx="5.5" cy="4.5" r="3.5" fill="#8ad88a" opacity=".5"/><path d="M5.5 2.5v6M2.5 5.5h6" stroke="#fff" stroke-width="1.8"/></svg>
<svg class="a" style="left:195px;top:650px;" width="11" height="11" viewBox="0 0 11 11"><circle cx="5.5" cy="5.5" r="5" fill="#e08070"/><path d="M3.5 3.5l4 4M7.5 3.5l-4 4" stroke="#f4f4f4" stroke-width="1.5"/></svg>
<div class="a" style="left:195px;top:663px;width:11px;height:1px;background:#b0b0b0"></div>
<svg class="a" style="left:195px;top:666px;" width="12" height="11" viewBox="0 0 12 11"><path d="M1 1l4 4" stroke="#c4c4c4" stroke-width="2.2"/><path d="M4 5h5v-3l3 4-4 4v-2H4z" fill="#6ac06a"/></svg>
<div class="a" style="left:272px;top:636px;width:29px;height:60px;background:#e2e2e2;border:1px solid #a0a0a0;border-radius:2px"></div>
<div class="a" style="left:278px;top:634px;width:13px;height:4px;background:#fff"></div>
<svg class="a" style="left:0px;top:0px;left:0;top:0;position:absolute" width="310" height="700" viewBox="0 0 310 700"><path d="M279.5 638.5L281.3 634.5M282.1 638.5L283.9 634.5M284.7 638.5L286.5 634.5M287.3 638.5L289.1 634.5" stroke="#666" stroke-width="1.1" fill="none"/><path d="M278.5 648L280.3 644M281.1 648L282.9 644M283.7 648L285.5 644M286.3 648L288.1 644M288.9 648L290.7 644M291.5 648L293.3 644M294.1 648L295.9 644" stroke="#666" stroke-width="1.1" fill="none"/></svg>
<div class="a" style="left:278px;top:652px;width:19px;height:7px;background:#fff;border:1px solid #888;border-radius:1px"></div>
<div class="a" style="left:280px;top:654px;width:1px;height:3px;background:#111"></div>
<svg class="a" style="left:279px;top:669px;" width="18" height="20" viewBox="0 0 18 20"><path d="M8 11L2 18" stroke="#c07a40" stroke-width="2.6" stroke-linecap="round"/><path d="M8 11L2 18" stroke="#555" stroke-width=".6" stroke-dasharray="1 2"/><circle cx="11" cy="7" r="5.2" fill="#bcdcf4" stroke="#8a9aaa" stroke-width="1.2"/><path d="M8 6a3 3 0 0 1 4-2" stroke="#fff" stroke-width="1" fill="none"/></svg>
<div class="t" style="left:316.30px;top:631.52px;font-size:8.6px;color:#111;font-weight:bold;transform:scaleX(0.9757);transform-origin:0 0;">Unused Editors</div>
<div class="a" style="left:311px;top:641px;width:654px;height:1px;background:#c8c8c8"></div>
<div class="a" style="left:311px;top:642px;width:18px;height:53px;background:#eeeeee"></div>
<div class="a" style="left:328px;top:642px;width:1px;height:53px;background:#aaaaaa"></div>
<svg class="a" style="left:315px;top:646px;" width="11" height="9" viewBox="0 0 11 9"><path d="M.5 .5h10L6.5 4.5v4h-2v-4z" fill="#555"/></svg>
<div class="a" style="left:335px;top:644px;width:88px;height:15px;background:#fff;border:1px solid #8a8a8a"></div>
<div class="t" style="left:337px;top:646px;height:11px;padding:0 1px;border:1px solid #333;border-radius:2px;font-family:'Liberation Serif',serif;font-size:10px;line-height:9px;color:#111">#</div>
<div class="t" style="left:351.00px;top:646.80px;font-size:8.5px;color:#808080;transform:scaleX(0.9350);transform-origin:0 0;">Id</div>
<div class="a" style="left:427px;top:644px;width:88px;height:15px;background:#fff;border:1px solid #8a8a8a"></div>
<div class="t" style="left:429px;top:646px;height:11px;padding:0 1px;border:1px solid #333;border-radius:2px;font-family:'Liberation Serif',serif;font-size:10px;line-height:9px;color:#111">T</div>
<div class="t" style="left:443.00px;top:646.80px;font-size:8.5px;color:#808080;transform:scaleX(0.9350);transform-origin:0 0;">Format</div>
<div class="a" style="left:519px;top:644px;width:88px;height:15px;background:#fff;border:1px solid #8a8a8a"></div>
<svg class="a" style="left:521px;top:646px;" width="12" height="11" viewBox="0 0 12 11"><rect x=".5" y=".5" width="11" height="10" rx="1" fill="#fff" stroke="#333"/><path d="M2.5 5.5l2.5 2.5 4.5-5.5" fill="none" stroke="#1a1a1a" stroke-width="1.5"/></svg>
<div class="t" style="left:535.00px;top:646.80px;font-size:8.5px;color:#808080;transform:scaleX(0.9350);transform-origin:0 0;">Use Filename</div>
<div class="a" style="left:611px;top:644px;width:88px;height:15px;background:#fff;border:1px solid #8a8a8a"></div>
<div class="t" style="left:613px;top:646px;height:11px;padding:0 1px;border:1px solid #333;border-radius:2px;font-family:'Liberation Serif',serif;font-size:10px;line-height:9px;color:#111">Te</div>
<div class="t" style="left:629.00px;top:646.80px;font-size:8.5px;color:#808080;transform:scaleX(0.9350);transform-origin:0 0;">Filename</div>
<div class="a" style="left:963px;top:603px;width:23px;height:6px;background:#b8b8b8"></div>
<div class="a" style="left:967px;top:609px;width:19px;height:94px;background:#ececec;border-left:1px solid #b0b0b0"></div>
<svg class="a" style="left:972px;top:613px;" width="9" height="13" viewBox="0 0 9 13"><rect x=".5" y=".5" width="8" height="12" fill="#5a6a8a"/><path d="M3 1v11M6 1v11" stroke="#9ab" stroke-width=".8"/><rect x="7" y="2" width="2" height="9" fill="#e8c060"/></svg>
<svg class="a" style="left:970px;top:632px;" width="12" height="12" viewBox="0 0 12 12"><circle cx="6" cy="6" r="5.5" fill="#5a78b8" stroke="#3a4a88" stroke-width=".6"/><circle cx="6" cy="6" r="3" fill="#9ab0d8"/></svg>
<div class="a" style="left:1px;top:702px;width:985px;height:3px;background:#f0f0f0"></div>
<div class="a" style="left:1px;top:704px;width:985px;height:1px;background:#9a9a9a"></div>
<div class="a" style="left:981px;top:79px;width:97px;height:9px;background:#f58a10"></div>
<div class="a" style="left:986px;top:88px;width:92px;height:617px;background:linear-gradient(#566674,#4a5a67 45%,#3e4d5a)"></div>
<div class="a" style="left:986px;top:88px;width:1px;height:617px;background:#25313c"></div>
<div class="t" style="left:1029.00px;top:80.37px;font-size:7.6px;color:#4a5058;font-weight:bold;transform:scaleX(1.0869);transform-origin:0 0;">VISION</div>
<div class="a" style="left:1056px;top:79px;width:19px;height:17px;background:#f58a10;border-radius:0 0 4px 4px"></div>
<svg class="a" style="left:1059px;top:80px;" width="13" height="13" viewBox="0 0 13 13"><path d="M.5 .5h3.2l2.8 4.2 2.8-4.2h3.2L8.3 6.5l4.3 6H9.4L6.5 8.4 3.6 12.5H.4l4.3-6z" fill="#fff"/></svg>
<div class="a" style="left:996px;top:104px;width:76px;height:38px;background:#cfe4f8;border:1px solid #2f6cb8"></div>
<div class="t" style="left:1021.50px;top:129.72px;font-size:8.6px;color:#111;font-weight:bold;transform:scaleX(0.9874);transform-origin:0 0;">Finish</div>
<svg class="a" style="left:1025px;top:106px;" width="18" height="18" viewBox="0 0 18 18"><path d="M1 5V1h4M13 1h4v4M17 13v4h-4M5 17H1v-4" fill="none" stroke="#e89040" stroke-width="1.6"/><circle cx="9" cy="9" r="5.8" fill="#fff" stroke="#2a9a2a" stroke-width="1.6"/><path d="M7.3 6.3L12 9L7.3 11.7z" fill="#2a9a2a"/></svg>
<div class="a" style="left:996px;top:151px;width:76px;height:36px;background:#dedede;border:1px solid #b4b4b4"></div>
<div class="t" style="left:1017.15px;top:174.38px;font-size:9px;color:#111;transform:scaleX(0.9148);transform-origin:0 0;">Workflow</div>
<svg class="a" style="left:1026px;top:153px;" width="16" height="17" viewBox="0 0 16 17"><path d="M2 2.5h9v4.5H5v4.5h9" fill="none" stroke="#2a8ad8" stroke-width="2.2"/><rect x="1" y="1" width="5" height="3" fill="#2a8ad8"/><rect x="1" y="13" width="14" height="3" fill="#2a8ad8"/></svg>
<div class="a" style="left:996px;top:197px;width:78px;height:1px;background:#8e8e8e"></div>
<div class="a" style="left:996px;top:198px;width:78px;height:1px;background:#3c4853"></div>
<div class="a" style="left:996px;top:207px;width:76px;height:36px;background:#dedede;border:1px solid #b4b4b4"></div>
<div class="t" style="left:1013.00px;top:230.38px;font-size:9px;color:#111;transform:scaleX(0.8568);transform-origin:0 0;">New Screen</div>
<svg class="a" style="left:1025px;top:209px;" width="19" height="17" viewBox="0 0 19 17"><rect x=".5" y="2.5" width="16" height="13" fill="#f4f4f4" stroke="#777"/><path d="M1 3h15v3H1z" fill="#e8e8e8"/><circle cx="15" cy="3.5" r="3" fill="#f0a030" stroke="#fff" stroke-width=".8"/></svg>
<div class="a" style="left:996px;top:252px;width:76px;height:36px;background:#dedede;border:1px solid #b4b4b4"></div>
<div class="t" style="left:1019.70px;top:275.38px;font-size:9px;color:#111;transform:scaleX(0.9076);transform-origin:0 0;">Reports</div>
<svg class="a" style="left:1026px;top:253px;" width="16" height="19" viewBox="0 0 16 19"><path d="M3 1h8v15H3z" fill="#eee" stroke="#bbb"/><path d="M11 8l4 6-4 3z" fill="#bbb"/><circle cx="6" cy="7" r="1.4" fill="#e8a020"/><circle cx="6" cy="11" r="1.4" fill="#d42a2a"/></svg>
<div class="a" style="left:996px;top:297px;width:76px;height:36px;background:#dedede;border:1px solid #b4b4b4"></div>
<div class="t" style="left:1024.35px;top:320.38px;font-size:9px;color:#111;transform:scaleX(0.8573);transform-origin:0 0;">Menu</div>
<svg class="a" style="left:1026px;top:298px;" width="16" height="19" viewBox="0 0 16 19"><rect x=".5" y="1.5" width="14" height="16" fill="#fff" stroke="#999"/><rect x="1" y="2" width="13" height="3" fill="#5aa0e0"/><path d="M3 8h8M3 11h6M3 14h8" stroke="#aaa"/></svg>
<div class="a" style="left:996px;top:342px;width:76px;height:36px;background:#dedede;border:1px solid #b4b4b4"></div>
<div class="t" style="left:1011.60px;top:365.38px;font-size:9px;color:#111;transform:scaleX(0.9164);transform-origin:0 0;">Settings</div>
<div class="a" style="left:1057px;top:346px;width:1px;height:28px;background:#9a9a9a"></div>
<svg class="a" style="left:1061px;top:359px;" width="7" height="4" viewBox="0 0 7 4"><path d="M0 0h7L3.5 4z" fill="#111"/></svg>
<svg class="a" style="left:1017px;top:343px;" width="18" height="19" viewBox="0 0 18 19"><rect x=".5" y=".5" width="16" height="17" fill="#fff" stroke="#999"/><rect x="1" y="1" width="15" height="4" fill="#f0a848"/><path d="M1 8h15M1 11h15M1 14h15M12 5v12" stroke="#bbb"/></svg>
<div class="a" style="left:996px;top:388px;width:78px;height:1px;background:#8e8e8e"></div>
<div class="a" style="left:996px;top:389px;width:78px;height:1px;background:#3c4853"></div>
<div class="a" style="left:996px;top:398px;width:76px;height:37px;background:#dedede;border:1px solid #b4b4b4"></div>
<div class="t" style="left:1006.10px;top:422.38px;font-size:9px;color:#111;transform:scaleX(0.8964);transform-origin:0 0;">Documents</div>
<div class="a" style="left:1057px;top:402px;width:1px;height:29px;background:#9a9a9a"></div>
<svg class="a" style="left:1061px;top:415px;" width="7" height="4" viewBox="0 0 7 4"><path d="M0 0h7L3.5 4z" fill="#111"/></svg>
<svg class="a" style="left:1017px;top:399px;" width="18" height="19" viewBox="0 0 18 19"><rect x="2.5" y=".5" width="14" height="17" fill="#a8cdf0" stroke="#3a78c0"/><path d="M.5 3h3M.5 6h3M.5 9h3M.5 12h3M.5 15h3" stroke="#333"/><rect x="6" y="5" width="7" height="6" fill="#eaf4fc"/></svg>
<div class="a" style="left:996px;top:660px;width:76px;height:36px;background:#dedede;border:1px solid #b4b4b4"></div>
<div class="t" style="left:1013.20px;top:683.38px;font-size:9px;color:#111;transform:scaleX(0.8665);transform-origin:0 0;">Switch User</div>
<svg class="a" style="left:1015px;top:660px;" width="38" height="22" viewBox="0 0 38 22"><circle cx="7" cy="6" r="4" fill="#aaa" stroke="#555" stroke-width=".6"/><path d="M1 20c0-6 3-8 6-8s6 2 6 8z" fill="#888" stroke="#444" stroke-width=".6"/><circle cx="31" cy="6" r="4" fill="#f0b070" stroke="#774" stroke-width=".6"/><path d="M25 20c0-6 3-8 6-8s6 2 6 8z" fill="#e89030" stroke="#864" stroke-width=".6"/><path d="M14 9a5 5 0 0 1 9-2" fill="none" stroke="#3aa83a" stroke-width="3"/><path d="M24 13a5 5 0 0 1 -9 2" fill="none" stroke="#3aa83a" stroke-width="3"/><path d="M24.5 3v6h-6z" fill="#3aa83a"/><path d="M13.5 19v-6h6z" fill="#3aa83a"/></svg>
</div></body></html>
